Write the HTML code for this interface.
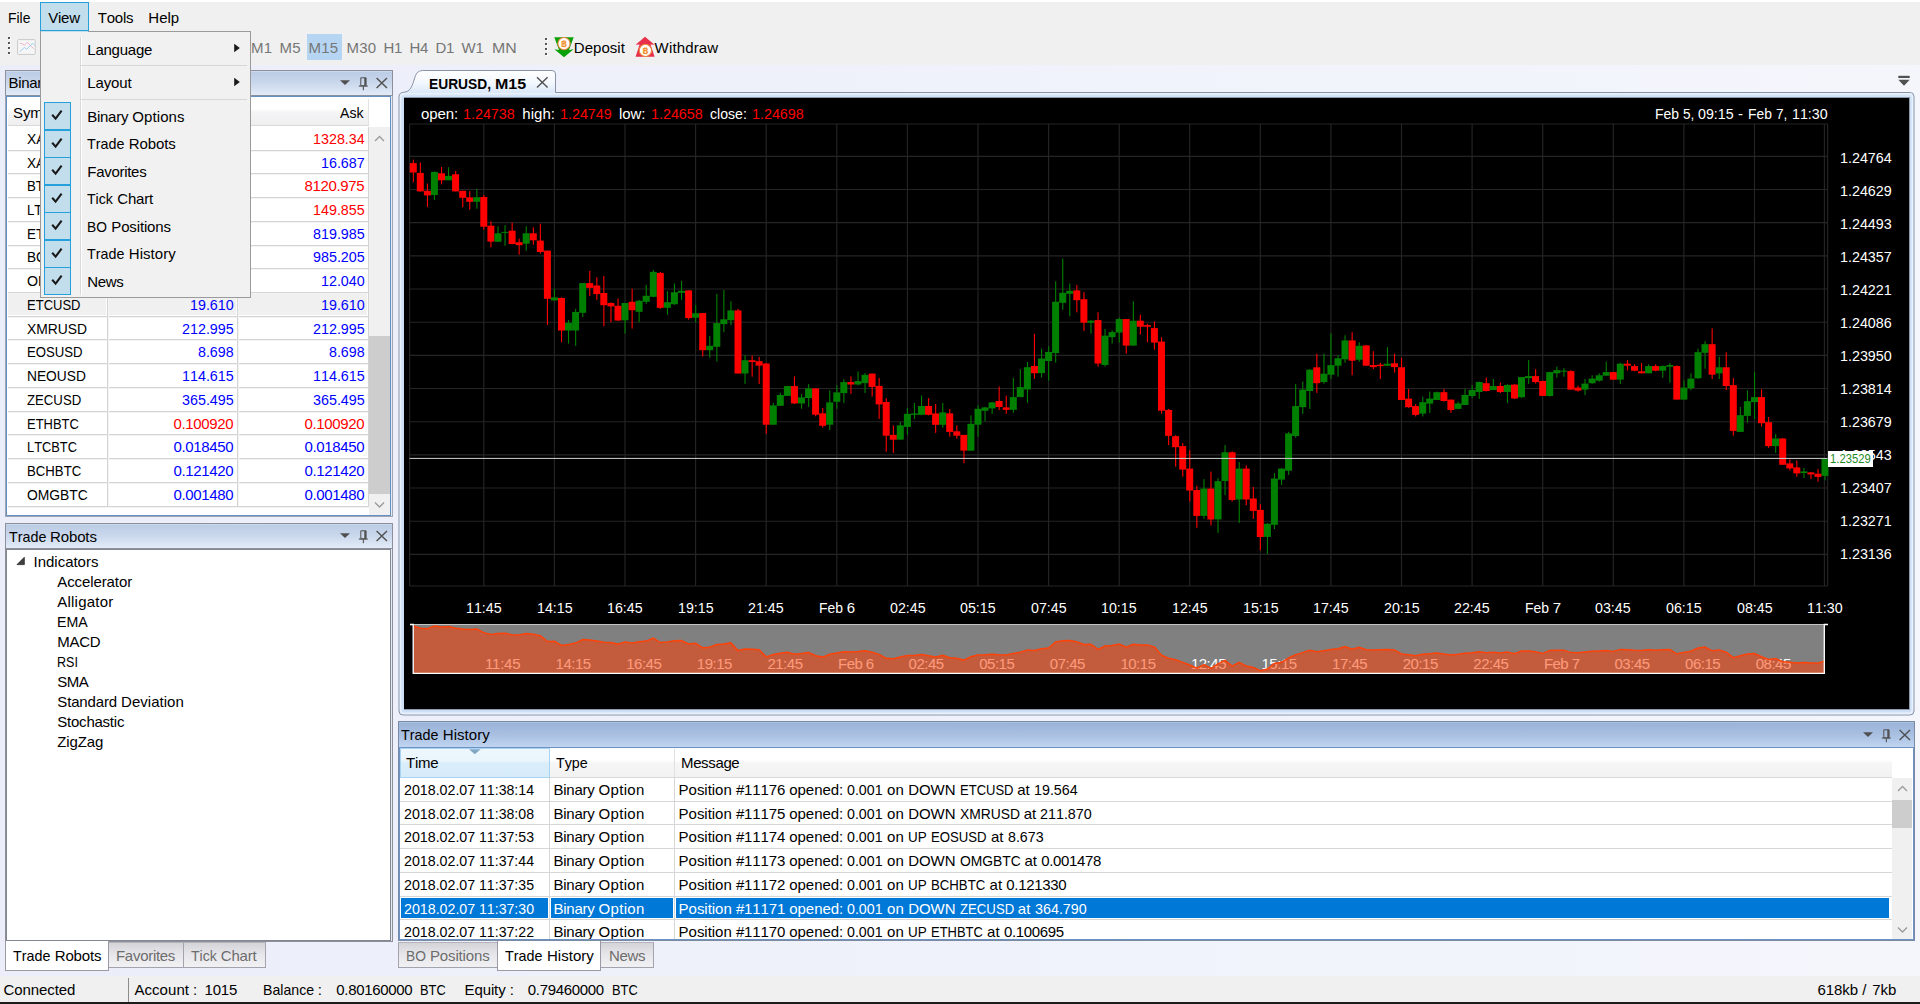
<!DOCTYPE html>
<html lang="en"><head><meta charset="utf-8"><title>Trading Terminal</title>
<style>
html,body{margin:0;padding:0}
body{width:1920px;height:1004px;overflow:hidden;background:#f0f0f0;font:15px/20px "Liberation Sans",sans-serif;position:relative}
div,span.t,svg{position:absolute;box-sizing:border-box}
span.t{white-space:pre;line-height:20px;height:20px;font-kerning:none;font-variant-ligatures:none}
span.w{display:inline-block;height:20px;vertical-align:baseline}
span.x{display:inline-block;transform-origin:0 50%}
.ttl{background:linear-gradient(#bacbe4,#c9d7ec 45%,#e4ecf8);border:1px solid #8d8f9a;border-bottom:none}
.ttla{background:linear-gradient(#98b2d6,#a9c0e2 50%,#c2d6f1);border:1px solid #7a8aa5;border-bottom:none}
.cell{background:#fff}
</style></head>
<body>
<div style="left:0px;top:0px;width:1920px;height:2px;background:#fff"></div>
<div style="left:0px;top:65px;width:1920px;height:911px;background:linear-gradient(90deg,#ebeef9,#f4f6fc)"></div>
<div style="left:0px;top:976px;width:1920px;height:28px;background:#f0f0f0"></div>
<div style="left:0px;top:1002px;width:1920px;height:2px;background:#1c1c1c"></div>
<div style="left:40px;top:2px;width:49px;height:29px;background:#c2deec;border:1px solid #26a0da"></div>
<span class="t" style="left:8.20px;top:7.50px;color:#000;"><span class="w" style="width:22.43px"><span class="x" style="transform:scaleX(0.9278)">File</span></span></span>
<span class="t" style="left:48.20px;top:7.50px;color:#000;"><span style="letter-spacing:-0.228px">View</span></span>
<span class="t" style="left:97.80px;top:7.50px;color:#000;"><span style="letter-spacing:-0.251px">Tools</span></span>
<span class="t" style="left:148.30px;top:7.50px;color:#000;"><span style="letter-spacing:0.021px">Help</span></span>
<div style="left:9px;top:38px;width:2.2px;height:2.2px;background:#fff"></div><div style="left:8px;top:37px;width:2.3px;height:2.3px;background:#555"></div><div style="left:9px;top:43px;width:2.2px;height:2.2px;background:#fff"></div><div style="left:8px;top:42px;width:2.3px;height:2.3px;background:#555"></div><div style="left:9px;top:48px;width:2.2px;height:2.2px;background:#fff"></div><div style="left:8px;top:47px;width:2.3px;height:2.3px;background:#555"></div><div style="left:9px;top:53px;width:2.2px;height:2.2px;background:#fff"></div><div style="left:8px;top:52px;width:2.3px;height:2.3px;background:#555"></div>
<svg style="left:17px;top:39px" width="19" height="16" viewBox="17 39 19 16"><rect x="17.6" y="39.6" width="17.6" height="14.8" rx="0.8" fill="#f6f6f6" stroke="#c9c9c9"/><polyline points="19.9,43.5 22,43.5 24.3,45.3 27,42.4 29,44 33.6,48.6" fill="none" stroke="#f0b4ca" stroke-width="1"/><polyline points="20,51.6 24.5,47.3 26.5,49.5 32.5,43.3 34.6,45.4" fill="none" stroke="#9dcbf3" stroke-width="1"/></svg>
<div style="left:307px;top:34px;width:35px;height:26px;background:#b5d5f3"></div>
<span class="t" style="left:251.00px;top:37.80px;color:#767676;"><span style="letter-spacing:0.356px">M1</span></span>
<span class="t" style="left:279.50px;top:37.80px;color:#767676;"><span style="letter-spacing:0.356px">M5</span></span>
<span class="t" style="left:308.50px;top:37.80px;color:#767676;"><span style="letter-spacing:0.151px">M15</span></span>
<span class="t" style="left:346.50px;top:37.80px;color:#767676;"><span style="letter-spacing:0.151px">M30</span></span>
<span class="t" style="left:383.50px;top:37.80px;color:#767676;"><span style="letter-spacing:-0.226px">H1</span></span>
<span class="t" style="left:409.50px;top:37.80px;color:#767676;"><span style="letter-spacing:-0.226px">H4</span></span>
<span class="t" style="left:435.50px;top:37.80px;color:#767676;"><span style="letter-spacing:-0.292px">D1</span></span>
<span class="t" style="left:461.50px;top:37.80px;color:#767676;"><span style="letter-spacing:-0.209px">W1</span></span>
<span class="t" style="left:491.50px;top:37.80px;color:#767676;"><span class="w" style="width:24.69px"><span class="x" style="transform:scaleX(1.0584)">MN</span></span></span>
<div style="left:546px;top:38.5px;width:2.2px;height:2.2px;background:#fff"></div><div style="left:545px;top:37.5px;width:2.3px;height:2.3px;background:#555"></div><div style="left:546px;top:43.5px;width:2.2px;height:2.2px;background:#fff"></div><div style="left:545px;top:42.5px;width:2.3px;height:2.3px;background:#555"></div><div style="left:546px;top:48.5px;width:2.2px;height:2.2px;background:#fff"></div><div style="left:545px;top:47.5px;width:2.3px;height:2.3px;background:#555"></div><div style="left:546px;top:53.5px;width:2.2px;height:2.2px;background:#fff"></div><div style="left:545px;top:52.5px;width:2.3px;height:2.3px;background:#555"></div>
<svg style="left:553px;top:36px" width="22" height="22" viewBox="553 36 22 22">
<polygon points="554.3,37.3 573.7,37.3 569,50 573.6,49.2 564,57.2 554.4,49.2 559,50" fill="#0aa00a"/>
<circle cx="564" cy="43.6" r="6.1" fill="#fff" stroke="#e8853a" stroke-width="1.1"/>
<text x="564.1" y="46.7" text-anchor="middle" font-family="Liberation Sans, sans-serif" font-weight="bold" font-size="8.4" fill="#f09030">B</text>
<line x1="563.3" y1="40" x2="563.3" y2="47.4" stroke="#f09030" stroke-width=".7"/><line x1="564.9" y1="40" x2="564.9" y2="47.4" stroke="#f09030" stroke-width=".7"/>
</svg>
<span class="t" style="left:573.80px;top:37.80px;color:#000;"><span style="letter-spacing:0.027px">Deposit</span></span>
<svg style="left:634px;top:35px" width="23" height="23" viewBox="634 35 23 23">
<polygon points="645,36.8 654.5,44.8 650.5,44.4 654.6,56.7 635.6,56.7 639.6,44.4 635.6,44.8" fill="#e8304a"/>
<circle cx="645.4" cy="50.4" r="6.1" fill="#fff" stroke="#e8853a" stroke-width="1.1"/>
<text x="645.5" y="53.5" text-anchor="middle" font-family="Liberation Sans, sans-serif" font-weight="bold" font-size="8.4" fill="#f09030">B</text>
<line x1="644.7" y1="46.8" x2="644.7" y2="54.2" stroke="#f09030" stroke-width=".7"/><line x1="646.3" y1="46.8" x2="646.3" y2="54.2" stroke="#f09030" stroke-width=".7"/>
</svg>
<span class="t" style="left:654.60px;top:37.80px;color:#000;"><span style="letter-spacing:0.148px">Withdraw</span></span>
<div class="ttl" style="left:5px;top:70px;width:388px;height:26px;"></div>
<div style="left:6px;top:71px;width:386px;height:1px;background:rgba(255,255,255,.25)"></div>
<span class="t" style="left:8.50px;top:73.10px;color:#000;"><span style="letter-spacing:-0.287px">Binary</span><span style="letter-spacing:-0.063px"> </span><span style="letter-spacing:0.111px">Options</span></span>
<svg style="left:339px;top:74px" width="52" height="18" viewBox="0 0 52 18">
<polygon points="1,6.2 11,6.2 6,11" fill="#505050"/>
<path d="M21.8,3.8 H27 V11.8 H21.8 Z" fill="none" stroke="#505050" stroke-width="1"/><rect x="25.3" y="3.8" width="1.9" height="8" fill="#505050"/>
<rect x="19.8" y="11.5" width="9" height="1.1" fill="#505050"/><rect x="23.8" y="12.4" width="1.1" height="3.8" fill="#505050"/>
<path d="M37.6,3.9 L48,14 M48,3.9 L37.6,14" stroke="#505050" stroke-width="1.4" fill="none"/>
</svg>
<div style="left:5px;top:95px;width:388px;height:422px;background:#e3ebf8;border:1px solid #a0a5b3;border-top-color:#8d8f9a"></div>
<div style="left:6px;top:96px;width:385px;height:420px;background:#fff;border:1px solid #6790c2"></div>
<div style="left:8px;top:98px;width:361px;height:28px;background:linear-gradient(#fff,#fff 40%,#f5f5f6 52%,#efeff1);border-bottom:1px solid #d9d9d9"></div>
<div style="left:107px;top:99px;width:1px;height:26px;background:#e2e2e2"></div>
<div style="left:237px;top:99px;width:1px;height:26px;background:#e2e2e2"></div>
<div style="left:368px;top:99px;width:1px;height:26px;background:#e2e2e2"></div>
<span class="t" style="left:13.00px;top:102.80px;color:#000;"><span style="letter-spacing:-0.109px">Symbol</span></span>
<span class="t" style="left:211.94px;top:102.80px;color:#000;"><span style="letter-spacing:-0.210px">Bid</span></span>
<span class="t" style="left:340.00px;top:102.80px;color:#000;"><span class="w" style="width:23.50px"><span class="x" style="transform:scaleX(0.9393)">Ask</span></span></span>
<div style="left:8px;top:150px;width:361px;height:1px;background:#d4d4d4"></div>
<div style="left:8px;top:151px;width:361px;height:1px;background:#f4f4f4"></div>
<span class="t" style="left:27.30px;top:128.80px;color:#000;"><span class="w" style="width:57.58px"><span class="x" style="transform:scaleX(0.9210)">XAUUSD</span></span></span>
<span class="t" style="left:181.53px;top:128.80px;color:#ff0000;"><span class="w" style="width:51.77px"><span class="x" style="transform:scaleX(0.9545)">1328.34</span></span></span>
<span class="t" style="left:312.53px;top:128.80px;color:#ff0000;"><span class="w" style="width:51.77px"><span class="x" style="transform:scaleX(0.9545)">1328.34</span></span></span>
<div style="left:8px;top:173px;width:361px;height:1px;background:#d4d4d4"></div>
<div style="left:8px;top:174px;width:361px;height:1px;background:#f4f4f4"></div>
<span class="t" style="left:27.30px;top:152.80px;color:#000;"><span class="w" style="width:57.56px"><span class="x" style="transform:scaleX(0.9085)">XAGUSD</span></span></span>
<span class="t" style="left:189.62px;top:152.80px;color:#0000ff;"><span class="w" style="width:43.68px"><span class="x" style="transform:scaleX(0.9519)">16.687</span></span></span>
<span class="t" style="left:320.62px;top:152.80px;color:#0000ff;"><span class="w" style="width:43.68px"><span class="x" style="transform:scaleX(0.9519)">16.687</span></span></span>
<div style="left:8px;top:197px;width:361px;height:1px;background:#d4d4d4"></div>
<div style="left:8px;top:198px;width:361px;height:1px;background:#f4f4f4"></div>
<span class="t" style="left:27.30px;top:175.80px;color:#000;"><span class="w" style="width:54.52px"><span class="x" style="transform:scaleX(0.8841)">BTCUSD</span></span></span>
<span class="t" style="left:173.45px;top:175.80px;color:#ff0000;"><span style="letter-spacing:-0.341px">8120.975</span></span>
<span class="t" style="left:304.45px;top:175.80px;color:#ff0000;"><span style="letter-spacing:-0.341px">8120.975</span></span>
<div style="left:8px;top:221px;width:361px;height:1px;background:#d4d4d4"></div>
<div style="left:8px;top:222px;width:361px;height:1px;background:#f4f4f4"></div>
<span class="t" style="left:27.30px;top:199.80px;color:#000;"><span class="w" style="width:52.99px"><span class="x" style="transform:scaleX(0.8829)">LTCUSD</span></span></span>
<span class="t" style="left:181.53px;top:199.80px;color:#ff0000;"><span class="w" style="width:51.77px"><span class="x" style="transform:scaleX(0.9545)">149.855</span></span></span>
<span class="t" style="left:312.53px;top:199.80px;color:#ff0000;"><span class="w" style="width:51.77px"><span class="x" style="transform:scaleX(0.9545)">149.855</span></span></span>
<div style="left:8px;top:245px;width:361px;height:1px;background:#d4d4d4"></div>
<div style="left:8px;top:246px;width:361px;height:1px;background:#f4f4f4"></div>
<span class="t" style="left:27.30px;top:223.80px;color:#000;"><span class="w" style="width:54.88px"><span class="x" style="transform:scaleX(0.8899)">ETHUSD</span></span></span>
<span class="t" style="left:181.53px;top:223.80px;color:#0000ff;"><span class="w" style="width:51.77px"><span class="x" style="transform:scaleX(0.9545)">819.985</span></span></span>
<span class="t" style="left:312.53px;top:223.80px;color:#0000ff;"><span class="w" style="width:51.77px"><span class="x" style="transform:scaleX(0.9545)">819.985</span></span></span>
<div style="left:8px;top:268px;width:361px;height:1px;background:#d4d4d4"></div>
<div style="left:8px;top:269px;width:361px;height:1px;background:#f4f4f4"></div>
<span class="t" style="left:27.30px;top:246.80px;color:#000;"><span class="w" style="width:57.31px"><span class="x" style="transform:scaleX(0.9048)">BCHUSD</span></span></span>
<span class="t" style="left:181.53px;top:246.80px;color:#0000ff;"><span class="w" style="width:51.77px"><span class="x" style="transform:scaleX(0.9545)">985.205</span></span></span>
<span class="t" style="left:312.53px;top:246.80px;color:#0000ff;"><span class="w" style="width:51.77px"><span class="x" style="transform:scaleX(0.9545)">985.205</span></span></span>
<div style="left:8px;top:292px;width:361px;height:1px;background:#d4d4d4"></div>
<div style="left:8px;top:293px;width:361px;height:1px;background:#f4f4f4"></div>
<span class="t" style="left:27.30px;top:270.80px;color:#000;"><span class="w" style="width:63.85px"><span class="x" style="transform:scaleX(0.9460)">OMGUSD</span></span></span>
<span class="t" style="left:189.62px;top:270.80px;color:#0000ff;"><span class="w" style="width:43.68px"><span class="x" style="transform:scaleX(0.9519)">12.040</span></span></span>
<span class="t" style="left:320.62px;top:270.80px;color:#0000ff;"><span class="w" style="width:43.68px"><span class="x" style="transform:scaleX(0.9519)">12.040</span></span></span>
<div style="left:8px;top:294px;width:98px;height:21px;background:#f0f0f0"></div>
<div style="left:109px;top:294px;width:127px;height:21px;background:#f0f0f0"></div>
<div style="left:239px;top:294px;width:128px;height:21px;background:#f0f0f0"></div>
<div style="left:8px;top:316px;width:361px;height:1px;background:#d4d4d4"></div>
<div style="left:8px;top:317px;width:361px;height:1px;background:#f4f4f4"></div>
<span class="t" style="left:27.30px;top:294.80px;color:#000;"><span class="w" style="width:53.52px"><span class="x" style="transform:scaleX(0.8678)">ETCUSD</span></span></span>
<span class="t" style="left:189.62px;top:294.80px;color:#0000ff;"><span class="w" style="width:43.68px"><span class="x" style="transform:scaleX(0.9519)">19.610</span></span></span>
<span class="t" style="left:320.62px;top:294.80px;color:#0000ff;"><span class="w" style="width:43.68px"><span class="x" style="transform:scaleX(0.9519)">19.610</span></span></span>
<div style="left:8px;top:339px;width:361px;height:1px;background:#d4d4d4"></div>
<div style="left:8px;top:340px;width:361px;height:1px;background:#f4f4f4"></div>
<span class="t" style="left:27.30px;top:318.80px;color:#000;"><span class="w" style="width:60.04px"><span class="x" style="transform:scaleX(0.9234)">XMRUSD</span></span></span>
<span class="t" style="left:181.53px;top:318.80px;color:#0000ff;"><span class="w" style="width:51.77px"><span class="x" style="transform:scaleX(0.9545)">212.995</span></span></span>
<span class="t" style="left:312.53px;top:318.80px;color:#0000ff;"><span class="w" style="width:51.77px"><span class="x" style="transform:scaleX(0.9545)">212.995</span></span></span>
<div style="left:8px;top:363px;width:361px;height:1px;background:#d4d4d4"></div>
<div style="left:8px;top:364px;width:361px;height:1px;background:#f4f4f4"></div>
<span class="t" style="left:27.30px;top:341.80px;color:#000;"><span class="w" style="width:55.64px"><span class="x" style="transform:scaleX(0.8782)">EOSUSD</span></span></span>
<span class="t" style="left:197.70px;top:341.80px;color:#0000ff;"><span class="w" style="width:35.60px"><span class="x" style="transform:scaleX(0.9480)">8.698</span></span></span>
<span class="t" style="left:328.70px;top:341.80px;color:#0000ff;"><span class="w" style="width:35.60px"><span class="x" style="transform:scaleX(0.9480)">8.698</span></span></span>
<div style="left:8px;top:387px;width:361px;height:1px;background:#d4d4d4"></div>
<div style="left:8px;top:388px;width:361px;height:1px;background:#f4f4f4"></div>
<span class="t" style="left:27.30px;top:365.80px;color:#000;"><span class="w" style="width:58.90px"><span class="x" style="transform:scaleX(0.9176)">NEOUSD</span></span></span>
<span class="t" style="left:181.53px;top:365.80px;color:#0000ff;"><span class="w" style="width:51.77px"><span class="x" style="transform:scaleX(0.9545)">114.615</span></span></span>
<span class="t" style="left:312.53px;top:365.80px;color:#0000ff;"><span class="w" style="width:51.77px"><span class="x" style="transform:scaleX(0.9545)">114.615</span></span></span>
<div style="left:8px;top:411px;width:361px;height:1px;background:#d4d4d4"></div>
<div style="left:8px;top:412px;width:361px;height:1px;background:#f4f4f4"></div>
<span class="t" style="left:27.30px;top:389.80px;color:#000;"><span class="w" style="width:54.21px"><span class="x" style="transform:scaleX(0.8791)">ZECUSD</span></span></span>
<span class="t" style="left:181.53px;top:389.80px;color:#0000ff;"><span class="w" style="width:51.77px"><span class="x" style="transform:scaleX(0.9545)">365.495</span></span></span>
<span class="t" style="left:312.53px;top:389.80px;color:#0000ff;"><span class="w" style="width:51.77px"><span class="x" style="transform:scaleX(0.9545)">365.495</span></span></span>
<div style="left:8px;top:434px;width:361px;height:1px;background:#d4d4d4"></div>
<div style="left:8px;top:435px;width:361px;height:1px;background:#f4f4f4"></div>
<span class="t" style="left:27.30px;top:413.80px;color:#000;"><span class="w" style="width:51.83px"><span class="x" style="transform:scaleX(0.8639)">ETHBTC</span></span></span>
<span class="t" style="left:173.45px;top:413.80px;color:#ff0000;"><span style="letter-spacing:-0.341px">0.100920</span></span>
<span class="t" style="left:304.45px;top:413.80px;color:#ff0000;"><span style="letter-spacing:-0.341px">0.100920</span></span>
<div style="left:8px;top:458px;width:361px;height:1px;background:#d4d4d4"></div>
<div style="left:8px;top:459px;width:361px;height:1px;background:#f4f4f4"></div>
<span class="t" style="left:27.30px;top:436.80px;color:#000;"><span class="w" style="width:49.94px"><span class="x" style="transform:scaleX(0.8560)">LTCBTC</span></span></span>
<span class="t" style="left:173.45px;top:436.80px;color:#0000ff;"><span style="letter-spacing:-0.341px">0.018450</span></span>
<span class="t" style="left:304.45px;top:436.80px;color:#0000ff;"><span style="letter-spacing:-0.341px">0.018450</span></span>
<div style="left:8px;top:482px;width:361px;height:1px;background:#d4d4d4"></div>
<div style="left:8px;top:483px;width:361px;height:1px;background:#f4f4f4"></div>
<span class="t" style="left:27.30px;top:460.80px;color:#000;"><span class="w" style="width:54.27px"><span class="x" style="transform:scaleX(0.8799)">BCHBTC</span></span></span>
<span class="t" style="left:173.45px;top:460.80px;color:#0000ff;"><span style="letter-spacing:-0.341px">0.121420</span></span>
<span class="t" style="left:304.45px;top:460.80px;color:#0000ff;"><span style="letter-spacing:-0.341px">0.121420</span></span>
<div style="left:8px;top:506px;width:361px;height:1px;background:#d4d4d4"></div>
<div style="left:8px;top:507px;width:361px;height:1px;background:#f4f4f4"></div>
<span class="t" style="left:27.30px;top:484.80px;color:#000;"><span class="w" style="width:60.81px"><span class="x" style="transform:scaleX(0.9235)">OMGBTC</span></span></span>
<span class="t" style="left:173.45px;top:484.80px;color:#0000ff;"><span style="letter-spacing:-0.341px">0.001480</span></span>
<span class="t" style="left:304.45px;top:484.80px;color:#0000ff;"><span style="letter-spacing:-0.341px">0.001480</span></span>
<div style="left:107px;top:127px;width:1px;height:379px;background:#d4d4d4"></div>
<div style="left:108px;top:127px;width:1px;height:379px;background:#f4f4f4"></div>
<div style="left:237px;top:127px;width:1px;height:379px;background:#d4d4d4"></div>
<div style="left:238px;top:127px;width:1px;height:379px;background:#f4f4f4"></div>
<div style="left:368px;top:127px;width:1px;height:379px;background:#d4d4d4"></div>
<div style="left:369px;top:127px;width:1px;height:379px;background:#f4f4f4"></div>
<div style="left:369px;top:127px;width:21px;height:388px;background:#f0f0f0"></div>
<div style="left:369px;top:336px;width:21px;height:157.5px;background:#cdcdcd"></div>
<svg style="left:374px;top:134.5px" width="11" height="8" viewBox="0 0 11 8"><polyline points="1,6 5.5,1.5 10,6" fill="none" stroke="#9a9a9a" stroke-width="1.3"/></svg>
<svg style="left:374px;top:500.8px" width="11" height="8" viewBox="0 0 11 8"><polyline points="1,1.5 5.5,6 10,1.5" fill="none" stroke="#9a9a9a" stroke-width="1.3"/></svg>
<div class="ttl" style="left:5px;top:523px;width:388px;height:26px;"></div>
<div style="left:6px;top:524px;width:386px;height:1px;background:rgba(255,255,255,.25)"></div>
<span class="t" style="left:8.50px;top:526.60px;color:#000;"><span class="w" style="width:37.38px"><span class="x" style="transform:scaleX(0.9539)">Trade</span></span><span style="letter-spacing:-0.063px"> </span><span style="letter-spacing:-0.119px">Robots</span></span>
<svg style="left:339px;top:527px" width="52" height="18" viewBox="0 0 52 18">
<polygon points="1,6.2 11,6.2 6,11" fill="#505050"/>
<path d="M21.8,3.8 H27 V11.8 H21.8 Z" fill="none" stroke="#505050" stroke-width="1"/><rect x="25.3" y="3.8" width="1.9" height="8" fill="#505050"/>
<rect x="19.8" y="11.5" width="9" height="1.1" fill="#505050"/><rect x="23.8" y="12.4" width="1.1" height="3.8" fill="#505050"/>
<path d="M37.6,3.9 L48,14 M48,3.9 L37.6,14" stroke="#505050" stroke-width="1.4" fill="none"/>
</svg>
<div style="left:5px;top:548px;width:388px;height:394px;background:#e3ebf8;border:1px solid #8d8f9a"></div>
<div style="left:6px;top:549px;width:385px;height:392px;background:#fff;border:1px solid #828790"></div>
<svg style="left:16px;top:556px" width="10" height="10" viewBox="0 0 10 10"><polygon points="1,8.6 8.3,8.6 8.3,1.3" fill="#404040" stroke="#262626" stroke-width=".8"/></svg>
<span class="t" style="left:33.50px;top:552.00px;color:#000;"><span style="letter-spacing:-0.010px">Indicators</span></span>
<span class="t" style="left:57.30px;top:572.00px;color:#000;"><span style="letter-spacing:-0.099px">Accelerator</span></span>
<span class="t" style="left:57.30px;top:592.00px;color:#000;"><span style="letter-spacing:0.214px">Alligator</span></span>
<span class="t" style="left:57.30px;top:612.00px;color:#000;"><span class="w" style="width:30.73px"><span class="x" style="transform:scaleX(0.9452)">EMA</span></span></span>
<span class="t" style="left:57.30px;top:632.00px;color:#000;"><span style="letter-spacing:-0.306px">MACD</span></span>
<span class="t" style="left:57.30px;top:652.00px;color:#000;"><span class="w" style="width:20.93px"><span class="x" style="transform:scaleX(0.8365)">RSI</span></span></span>
<span class="t" style="left:57.30px;top:672.00px;color:#000;"><span style="letter-spacing:-0.470px">SMA</span></span>
<span class="t" style="left:57.30px;top:692.00px;color:#000;"><span style="letter-spacing:-0.153px">Standard</span><span style="letter-spacing:-0.063px"> </span><span style="letter-spacing:0.028px">Deviation</span></span>
<span class="t" style="left:57.30px;top:712.00px;color:#000;"><span style="letter-spacing:-0.232px">Stochastic</span></span>
<span class="t" style="left:57.30px;top:732.00px;color:#000;"><span style="letter-spacing:-0.108px">ZigZag</span></span>
<div style="left:108px;top:942px;width:76px;height:26px;background:linear-gradient(#d3d3d8,#e6e6ea 45%,#f1f1f4);border:1px solid #a3a3ad;border-top-color:#b4b4bc"></div><span class="t" style="left:116.00px;top:945.80px;color:#6c6c6c;"><span style="letter-spacing:-0.292px">Favorites</span></span><div style="left:183px;top:942px;width:83px;height:26px;background:linear-gradient(#d3d3d8,#e6e6ea 45%,#f1f1f4);border:1px solid #a3a3ad;border-top-color:#b4b4bc"></div><span class="t" style="left:190.80px;top:945.80px;color:#6c6c6c;"><span class="w" style="width:25.88px"><span class="x" style="transform:scaleX(0.9410)">Tick</span></span><span style="letter-spacing:-0.063px"> </span><span style="letter-spacing:-0.198px">Chart</span></span><div style="left:5px;top:941px;width:104px;height:29.5px;background:#fff;border:1px solid #9a9aa6;border-top:none"></div><span class="t" style="left:13.20px;top:945.80px;color:#000;"><span class="w" style="width:37.38px"><span class="x" style="transform:scaleX(0.9539)">Trade</span></span><span style="letter-spacing:-0.063px"> </span><span style="letter-spacing:-0.119px">Robots</span></span>
<svg style="left:390px;top:64px" width="1530" height="660" viewBox="390 64 1530 660">
<defs><linearGradient id="pg" x1="0" y1="0" x2="0" y2="1" gradientUnits="userSpaceOnUse" ><stop offset="0" stop-color="#fff"/><stop offset="0.1" stop-color="#fff"/><stop offset="1" stop-color="#fff"/></linearGradient>
<linearGradient id="tg" gradientUnits="userSpaceOnUse" x1="0" y1="70" x2="0" y2="98"><stop offset="0" stop-color="#ffffff"/><stop offset=".45" stop-color="#f3f8fe"/><stop offset="1" stop-color="#cfe0f6"/></linearGradient></defs>
<path d="M399,711 V97 Q399,92.6 403.5,92.3 C410.6,92 412.2,86 415,77 C416.6,72 419,70.5 424,70.5 H552 Q555.5,70.5 555.5,74 V92.5 H1910 Q1914,92.5 1914,96.5 V711 Q1914,715 1910,715 H403 Q399,715 399,711 Z" fill="url(#tg)" stroke="#8a92a8" stroke-width="1"/>
<path d="M400.6,710 V97 Q400.6,94 403.6,93.8 H1909.4 Q1912.4,94 1912.4,97 V710 Q1912.4,713.4 1909.4,713.4 H403.6 Q400.6,713.4 400.6,710Z" fill="none" stroke="#e9f1fb" stroke-width="1.6"/>
<path d="M537,77.3 L547.6,87.6 M547.6,77.3 L537,87.6" stroke="#505050" stroke-width="1.4"/>
<rect x="1898.3" y="75.8" width="11.4" height="2.2" fill="#505050"/><polygon points="1898.3,79.8 1909.7,79.8 1904,85.8" fill="#505050"/>
</svg>
<span class="t" style="left:429.00px;top:73.80px;color:#000;font-weight:bold;"><span class="w" style="width:61.98px"><span class="x" style="transform:scaleX(0.9181)">EURUSD,</span></span><span style="letter-spacing:0.152px"> </span><span class="w" style="width:31.19px"><span class="x" style="transform:scaleX(1.0687)">M15</span></span></span>
<div style="left:403.5px;top:97px;width:1506px;height:612.8px;background:#8d98ab"></div>
<div style="left:404px;top:97.5px;width:1505px;height:611.6px;background:#000"></div>
<svg style="left:404px;top:97px" width="1505" height="613" viewBox="404 97 1505 613" shape-rendering="crispEdges">
<g stroke="#252525" stroke-width="1.15" shape-rendering="auto">
<line x1="409.6" y1="124.0" x2="1827.6" y2="124.0"/>
<line x1="409.6" y1="156.3" x2="1827.6" y2="156.3"/>
<line x1="409.6" y1="189.5" x2="1827.6" y2="189.5"/>
<line x1="409.6" y1="222.6" x2="1827.6" y2="222.6"/>
<line x1="409.6" y1="255.8" x2="1827.6" y2="255.8"/>
<line x1="409.6" y1="289.0" x2="1827.6" y2="289.0"/>
<line x1="409.6" y1="322.2" x2="1827.6" y2="322.2"/>
<line x1="409.6" y1="355.3" x2="1827.6" y2="355.3"/>
<line x1="409.6" y1="388.5" x2="1827.6" y2="388.5"/>
<line x1="409.6" y1="421.7" x2="1827.6" y2="421.7"/>
<line x1="409.6" y1="454.8" x2="1827.6" y2="454.8"/>
<line x1="409.6" y1="488.0" x2="1827.6" y2="488.0"/>
<line x1="409.6" y1="521.2" x2="1827.6" y2="521.2"/>
<line x1="409.6" y1="554.3" x2="1827.6" y2="554.3"/>
<line x1="409.6" y1="586.0" x2="1827.6" y2="586.0"/>
<line x1="409.6" y1="124" x2="409.6" y2="586"/>
<line x1="483.8" y1="124" x2="483.8" y2="586"/>
<line x1="554.4" y1="124" x2="554.4" y2="586"/>
<line x1="625.0" y1="124" x2="625.0" y2="586"/>
<line x1="695.6" y1="124" x2="695.6" y2="586"/>
<line x1="766.2" y1="124" x2="766.2" y2="586"/>
<line x1="836.8" y1="124" x2="836.8" y2="586"/>
<line x1="907.4" y1="124" x2="907.4" y2="586"/>
<line x1="978.0" y1="124" x2="978.0" y2="586"/>
<line x1="1048.6" y1="124" x2="1048.6" y2="586"/>
<line x1="1119.2" y1="124" x2="1119.2" y2="586"/>
<line x1="1189.7" y1="124" x2="1189.7" y2="586"/>
<line x1="1260.3" y1="124" x2="1260.3" y2="586"/>
<line x1="1330.9" y1="124" x2="1330.9" y2="586"/>
<line x1="1401.5" y1="124" x2="1401.5" y2="586"/>
<line x1="1472.1" y1="124" x2="1472.1" y2="586"/>
<line x1="1542.7" y1="124" x2="1542.7" y2="586"/>
<line x1="1613.3" y1="124" x2="1613.3" y2="586"/>
<line x1="1683.9" y1="124" x2="1683.9" y2="586"/>
<line x1="1754.5" y1="124" x2="1754.5" y2="586"/>
<line x1="1824.4" y1="124" x2="1824.4" y2="586"/>
<line x1="1827.6" y1="124" x2="1827.6" y2="586"/>
</g>
<rect x="412.8" y="159.6" width="1.1" height="22.7" fill="#ff0000" shape-rendering="auto"/><rect x="409.8" y="163.1" width="7" height="9.4" fill="#ff0000" shape-rendering="auto"/>
<rect x="419.8" y="162.4" width="1.1" height="29.1" fill="#ff0000" shape-rendering="auto"/><rect x="416.8" y="172.9" width="7" height="18.5" fill="#ff0000" shape-rendering="auto"/>
<rect x="426.9" y="183.5" width="1.1" height="23.7" fill="#ff0000" shape-rendering="auto"/><rect x="423.9" y="190.8" width="7" height="4.6" fill="#ff0000" shape-rendering="auto"/>
<rect x="433.9" y="171.5" width="1.1" height="28.3" fill="#008000" shape-rendering="auto"/><rect x="430.9" y="171.9" width="7" height="23.1" fill="#008000" shape-rendering="auto"/>
<rect x="441.0" y="167.1" width="1.1" height="17.3" fill="#ff0000" shape-rendering="auto"/><rect x="438.0" y="173.3" width="7" height="7.0" fill="#ff0000" shape-rendering="auto"/>
<rect x="448.0" y="167.3" width="1.1" height="12.9" fill="#008000" shape-rendering="auto"/><rect x="445.0" y="175.9" width="7" height="4.4" fill="#008000" shape-rendering="auto"/>
<rect x="455.1" y="170.9" width="1.1" height="20.5" fill="#ff0000" shape-rendering="auto"/><rect x="452.1" y="174.3" width="7" height="17.1" fill="#ff0000" shape-rendering="auto"/>
<rect x="462.2" y="190.8" width="1.1" height="16.3" fill="#ff0000" shape-rendering="auto"/><rect x="459.2" y="190.8" width="7" height="7.0" fill="#ff0000" shape-rendering="auto"/>
<rect x="469.2" y="191.2" width="1.1" height="18.5" fill="#ff0000" shape-rendering="auto"/><rect x="466.2" y="197.4" width="7" height="4.4" fill="#ff0000" shape-rendering="auto"/>
<rect x="476.3" y="188.8" width="1.1" height="19.9" fill="#008000" shape-rendering="auto"/><rect x="473.3" y="197.2" width="7" height="4.6" fill="#008000" shape-rendering="auto"/>
<rect x="483.3" y="195.0" width="1.1" height="34.7" fill="#ff0000" shape-rendering="auto"/><rect x="480.3" y="197.0" width="7" height="29.7" fill="#ff0000" shape-rendering="auto"/>
<rect x="490.4" y="221.3" width="1.1" height="25.9" fill="#ff0000" shape-rendering="auto"/><rect x="487.4" y="225.7" width="7" height="15.9" fill="#ff0000" shape-rendering="auto"/>
<rect x="497.5" y="226.3" width="1.1" height="15.7" fill="#008000" shape-rendering="auto"/><rect x="494.5" y="233.3" width="7" height="8.4" fill="#008000" shape-rendering="auto"/>
<rect x="504.5" y="225.1" width="1.1" height="20.7" fill="#008000" shape-rendering="auto"/><rect x="501.5" y="231.9" width="7" height="1.0" fill="#008000" shape-rendering="auto"/>
<rect x="511.6" y="222.7" width="1.1" height="21.7" fill="#ff0000" shape-rendering="auto"/><rect x="508.6" y="230.7" width="7" height="13.3" fill="#ff0000" shape-rendering="auto"/>
<rect x="518.6" y="238.6" width="1.1" height="16.1" fill="#ff0000" shape-rendering="auto"/><rect x="515.6" y="242.2" width="7" height="3.0" fill="#ff0000" shape-rendering="auto"/>
<rect x="525.7" y="226.3" width="1.1" height="24.3" fill="#008000" shape-rendering="auto"/><rect x="522.7" y="233.3" width="7" height="10.4" fill="#008000" shape-rendering="auto"/>
<rect x="532.8" y="227.3" width="1.1" height="17.5" fill="#ff0000" shape-rendering="auto"/><rect x="529.8" y="233.3" width="7" height="7.0" fill="#ff0000" shape-rendering="auto"/>
<rect x="539.8" y="223.7" width="1.1" height="29.9" fill="#ff0000" shape-rendering="auto"/><rect x="536.8" y="240.6" width="7" height="11.4" fill="#ff0000" shape-rendering="auto"/>
<rect x="546.9" y="250.6" width="1.1" height="74.3" fill="#ff0000" shape-rendering="auto"/><rect x="543.9" y="250.6" width="7" height="48.2" fill="#ff0000" shape-rendering="auto"/>
<rect x="553.9" y="288.8" width="1.1" height="11.6" fill="#008000" shape-rendering="auto"/><rect x="550.9" y="297.4" width="7" height="3.0" fill="#008000" shape-rendering="auto"/>
<rect x="561.0" y="297.4" width="1.1" height="44.8" fill="#ff0000" shape-rendering="auto"/><rect x="558.0" y="298.0" width="7" height="32.5" fill="#ff0000" shape-rendering="auto"/>
<rect x="568.0" y="319.9" width="1.1" height="23.7" fill="#008000" shape-rendering="auto"/><rect x="565.0" y="322.9" width="7" height="7.6" fill="#008000" shape-rendering="auto"/>
<rect x="575.1" y="308.8" width="1.1" height="37.1" fill="#008000" shape-rendering="auto"/><rect x="572.1" y="312.0" width="7" height="18.5" fill="#008000" shape-rendering="auto"/>
<rect x="582.2" y="283.1" width="1.1" height="33.9" fill="#008000" shape-rendering="auto"/><rect x="579.2" y="283.1" width="7" height="29.7" fill="#008000" shape-rendering="auto"/>
<rect x="589.2" y="270.9" width="1.1" height="25.1" fill="#ff0000" shape-rendering="auto"/><rect x="586.2" y="283.1" width="7" height="4.8" fill="#ff0000" shape-rendering="auto"/>
<rect x="596.3" y="277.1" width="1.1" height="22.7" fill="#ff0000" shape-rendering="auto"/><rect x="593.3" y="285.5" width="7" height="8.6" fill="#ff0000" shape-rendering="auto"/>
<rect x="603.3" y="275.9" width="1.1" height="50.2" fill="#ff0000" shape-rendering="auto"/><rect x="600.3" y="293.0" width="7" height="12.2" fill="#ff0000" shape-rendering="auto"/>
<rect x="610.4" y="302.4" width="1.1" height="19.9" fill="#ff0000" shape-rendering="auto"/><rect x="607.4" y="303.0" width="7" height="3.4" fill="#ff0000" shape-rendering="auto"/>
<rect x="617.5" y="298.6" width="1.1" height="22.3" fill="#ff0000" shape-rendering="auto"/><rect x="614.5" y="305.8" width="7" height="14.7" fill="#ff0000" shape-rendering="auto"/>
<rect x="624.5" y="303.0" width="1.1" height="30.5" fill="#008000" shape-rendering="auto"/><rect x="621.5" y="303.0" width="7" height="17.3" fill="#008000" shape-rendering="auto"/>
<rect x="631.6" y="288.8" width="1.1" height="39.8" fill="#ff0000" shape-rendering="auto"/><rect x="628.6" y="301.8" width="7" height="8.4" fill="#ff0000" shape-rendering="auto"/>
<rect x="638.6" y="299.8" width="1.1" height="22.3" fill="#008000" shape-rendering="auto"/><rect x="635.6" y="300.8" width="7" height="11.0" fill="#008000" shape-rendering="auto"/>
<rect x="645.7" y="284.9" width="1.1" height="18.9" fill="#008000" shape-rendering="auto"/><rect x="642.7" y="295.8" width="7" height="6.0" fill="#008000" shape-rendering="auto"/>
<rect x="652.8" y="269.9" width="1.1" height="27.3" fill="#008000" shape-rendering="auto"/><rect x="649.8" y="271.9" width="7" height="24.9" fill="#008000" shape-rendering="auto"/>
<rect x="659.8" y="271.9" width="1.1" height="36.9" fill="#ff0000" shape-rendering="auto"/><rect x="656.8" y="272.9" width="7" height="34.9" fill="#ff0000" shape-rendering="auto"/>
<rect x="666.9" y="291.2" width="1.1" height="23.5" fill="#008000" shape-rendering="auto"/><rect x="663.9" y="302.2" width="7" height="5.6" fill="#008000" shape-rendering="auto"/>
<rect x="673.9" y="283.5" width="1.1" height="21.3" fill="#008000" shape-rendering="auto"/><rect x="670.9" y="292.2" width="7" height="12.0" fill="#008000" shape-rendering="auto"/>
<rect x="681.0" y="280.9" width="1.1" height="18.9" fill="#008000" shape-rendering="auto"/><rect x="678.0" y="290.8" width="7" height="2.0" fill="#008000" shape-rendering="auto"/>
<rect x="688.1" y="290.4" width="1.1" height="29.3" fill="#ff0000" shape-rendering="auto"/><rect x="685.1" y="290.4" width="7" height="27.7" fill="#ff0000" shape-rendering="auto"/>
<rect x="695.1" y="305.2" width="1.1" height="16.9" fill="#008000" shape-rendering="auto"/><rect x="692.1" y="313.3" width="7" height="4.4" fill="#008000" shape-rendering="auto"/>
<rect x="702.2" y="313.1" width="1.1" height="43.4" fill="#ff0000" shape-rendering="auto"/><rect x="699.2" y="313.1" width="7" height="37.1" fill="#ff0000" shape-rendering="auto"/>
<rect x="709.2" y="336.1" width="1.1" height="21.7" fill="#008000" shape-rendering="auto"/><rect x="706.2" y="345.8" width="7" height="4.4" fill="#008000" shape-rendering="auto"/>
<rect x="716.3" y="293.8" width="1.1" height="67.7" fill="#008000" shape-rendering="auto"/><rect x="713.3" y="323.1" width="7" height="23.7" fill="#008000" shape-rendering="auto"/>
<rect x="723.3" y="290.0" width="1.1" height="42.2" fill="#008000" shape-rendering="auto"/><rect x="720.3" y="319.3" width="7" height="4.8" fill="#008000" shape-rendering="auto"/>
<rect x="730.4" y="301.2" width="1.1" height="23.9" fill="#008000" shape-rendering="auto"/><rect x="727.4" y="310.4" width="7" height="9.8" fill="#008000" shape-rendering="auto"/>
<rect x="737.5" y="308.8" width="1.1" height="64.7" fill="#ff0000" shape-rendering="auto"/><rect x="734.5" y="310.4" width="7" height="63.1" fill="#ff0000" shape-rendering="auto"/>
<rect x="744.5" y="355.2" width="1.1" height="28.7" fill="#008000" shape-rendering="auto"/><rect x="741.5" y="360.2" width="7" height="13.3" fill="#008000" shape-rendering="auto"/>
<rect x="751.6" y="355.6" width="1.1" height="21.1" fill="#ff0000" shape-rendering="auto"/><rect x="748.6" y="360.2" width="7" height="1.8" fill="#ff0000" shape-rendering="auto"/>
<rect x="758.6" y="356.8" width="1.1" height="27.3" fill="#ff0000" shape-rendering="auto"/><rect x="755.6" y="361.2" width="7" height="4.4" fill="#ff0000" shape-rendering="auto"/>
<rect x="765.7" y="363.1" width="1.1" height="70.7" fill="#ff0000" shape-rendering="auto"/><rect x="762.7" y="363.5" width="7" height="61.2" fill="#ff0000" shape-rendering="auto"/>
<rect x="772.8" y="403.0" width="1.1" height="21.7" fill="#008000" shape-rendering="auto"/><rect x="769.8" y="405.4" width="7" height="19.3" fill="#008000" shape-rendering="auto"/>
<rect x="779.8" y="392.8" width="1.1" height="12.9" fill="#008000" shape-rendering="auto"/><rect x="776.8" y="395.0" width="7" height="10.8" fill="#008000" shape-rendering="auto"/>
<rect x="786.9" y="386.1" width="1.1" height="9.8" fill="#008000" shape-rendering="auto"/><rect x="783.9" y="386.1" width="7" height="9.8" fill="#008000" shape-rendering="auto"/>
<rect x="793.9" y="376.5" width="1.1" height="27.5" fill="#ff0000" shape-rendering="auto"/><rect x="790.9" y="386.1" width="7" height="17.3" fill="#ff0000" shape-rendering="auto"/>
<rect x="801.0" y="394.0" width="1.1" height="14.7" fill="#008000" shape-rendering="auto"/><rect x="798.0" y="397.4" width="7" height="6.0" fill="#008000" shape-rendering="auto"/>
<rect x="808.1" y="384.1" width="1.1" height="22.7" fill="#008000" shape-rendering="auto"/><rect x="805.1" y="388.4" width="7" height="9.6" fill="#008000" shape-rendering="auto"/>
<rect x="815.1" y="388.4" width="1.1" height="27.9" fill="#ff0000" shape-rendering="auto"/><rect x="812.1" y="388.4" width="7" height="26.3" fill="#ff0000" shape-rendering="auto"/>
<rect x="822.2" y="408.0" width="1.1" height="19.7" fill="#ff0000" shape-rendering="auto"/><rect x="819.2" y="413.3" width="7" height="12.5" fill="#ff0000" shape-rendering="auto"/>
<rect x="829.2" y="390.4" width="1.1" height="39.8" fill="#008000" shape-rendering="auto"/><rect x="826.2" y="402.4" width="7" height="22.3" fill="#008000" shape-rendering="auto"/>
<rect x="836.3" y="385.5" width="1.1" height="23.3" fill="#008000" shape-rendering="auto"/><rect x="833.3" y="392.4" width="7" height="9.4" fill="#008000" shape-rendering="auto"/>
<rect x="843.3" y="379.1" width="1.1" height="23.9" fill="#008000" shape-rendering="auto"/><rect x="840.3" y="382.1" width="7" height="11.0" fill="#008000" shape-rendering="auto"/>
<rect x="850.4" y="376.5" width="1.1" height="17.3" fill="#ff0000" shape-rendering="auto"/><rect x="847.4" y="382.1" width="7" height="2.4" fill="#ff0000" shape-rendering="auto"/>
<rect x="857.5" y="371.6" width="1.1" height="13.9" fill="#008000" shape-rendering="auto"/><rect x="854.5" y="381.1" width="7" height="3.4" fill="#008000" shape-rendering="auto"/>
<rect x="864.5" y="373.0" width="1.1" height="19.9" fill="#008000" shape-rendering="auto"/><rect x="861.5" y="374.9" width="7" height="8.2" fill="#008000" shape-rendering="auto"/>
<rect x="871.6" y="373.6" width="1.1" height="22.9" fill="#ff0000" shape-rendering="auto"/><rect x="868.6" y="373.6" width="7" height="13.3" fill="#ff0000" shape-rendering="auto"/>
<rect x="878.6" y="377.9" width="1.1" height="41.0" fill="#ff0000" shape-rendering="auto"/><rect x="875.6" y="385.9" width="7" height="18.5" fill="#ff0000" shape-rendering="auto"/>
<rect x="885.7" y="398.1" width="1.1" height="53.6" fill="#ff0000" shape-rendering="auto"/><rect x="882.7" y="402.0" width="7" height="33.7" fill="#ff0000" shape-rendering="auto"/>
<rect x="892.8" y="425.3" width="1.1" height="27.5" fill="#ff0000" shape-rendering="auto"/><rect x="889.8" y="434.9" width="7" height="4.8" fill="#ff0000" shape-rendering="auto"/>
<rect x="899.8" y="422.0" width="1.1" height="17.7" fill="#008000" shape-rendering="auto"/><rect x="896.8" y="425.3" width="7" height="14.3" fill="#008000" shape-rendering="auto"/>
<rect x="906.9" y="407.8" width="1.1" height="27.1" fill="#008000" shape-rendering="auto"/><rect x="903.9" y="413.8" width="7" height="13.1" fill="#008000" shape-rendering="auto"/>
<rect x="913.9" y="403.0" width="1.1" height="15.9" fill="#008000" shape-rendering="auto"/><rect x="910.9" y="413.4" width="7" height="1.4" fill="#008000" shape-rendering="auto"/>
<rect x="921.0" y="395.5" width="1.1" height="19.3" fill="#008000" shape-rendering="auto"/><rect x="918.0" y="406.0" width="7" height="8.8" fill="#008000" shape-rendering="auto"/>
<rect x="928.1" y="398.1" width="1.1" height="17.3" fill="#ff0000" shape-rendering="auto"/><rect x="925.1" y="406.0" width="7" height="8.8" fill="#ff0000" shape-rendering="auto"/>
<rect x="935.1" y="404.0" width="1.1" height="28.9" fill="#ff0000" shape-rendering="auto"/><rect x="932.1" y="413.4" width="7" height="11.4" fill="#ff0000" shape-rendering="auto"/>
<rect x="942.2" y="403.0" width="1.1" height="24.7" fill="#008000" shape-rendering="auto"/><rect x="939.2" y="412.4" width="7" height="12.4" fill="#008000" shape-rendering="auto"/>
<rect x="949.2" y="409.0" width="1.1" height="27.7" fill="#ff0000" shape-rendering="auto"/><rect x="946.2" y="413.4" width="7" height="18.5" fill="#ff0000" shape-rendering="auto"/>
<rect x="956.3" y="425.3" width="1.1" height="13.5" fill="#ff0000" shape-rendering="auto"/><rect x="953.3" y="431.3" width="7" height="4.4" fill="#ff0000" shape-rendering="auto"/>
<rect x="963.4" y="434.9" width="1.1" height="28.3" fill="#ff0000" shape-rendering="auto"/><rect x="960.4" y="434.9" width="7" height="15.7" fill="#ff0000" shape-rendering="auto"/>
<rect x="970.4" y="415.4" width="1.1" height="35.3" fill="#008000" shape-rendering="auto"/><rect x="967.4" y="423.8" width="7" height="26.9" fill="#008000" shape-rendering="auto"/>
<rect x="977.5" y="405.4" width="1.1" height="31.3" fill="#008000" shape-rendering="auto"/><rect x="974.5" y="408.8" width="7" height="15.9" fill="#008000" shape-rendering="auto"/>
<rect x="984.5" y="406.8" width="1.1" height="14.5" fill="#008000" shape-rendering="auto"/><rect x="981.5" y="407.4" width="7" height="3.4" fill="#008000" shape-rendering="auto"/>
<rect x="991.6" y="402.0" width="1.1" height="11.8" fill="#008000" shape-rendering="auto"/><rect x="988.6" y="402.4" width="7" height="6.0" fill="#008000" shape-rendering="auto"/>
<rect x="998.6" y="386.5" width="1.1" height="23.5" fill="#ff0000" shape-rendering="auto"/><rect x="995.6" y="401.0" width="7" height="6.0" fill="#ff0000" shape-rendering="auto"/>
<rect x="1005.7" y="395.5" width="1.1" height="18.3" fill="#ff0000" shape-rendering="auto"/><rect x="1002.7" y="407.4" width="7" height="2.4" fill="#ff0000" shape-rendering="auto"/>
<rect x="1012.8" y="377.9" width="1.1" height="34.9" fill="#008000" shape-rendering="auto"/><rect x="1009.8" y="397.1" width="7" height="12.7" fill="#008000" shape-rendering="auto"/>
<rect x="1019.8" y="369.2" width="1.1" height="27.9" fill="#008000" shape-rendering="auto"/><rect x="1016.8" y="387.1" width="7" height="10.0" fill="#008000" shape-rendering="auto"/>
<rect x="1026.9" y="362.0" width="1.1" height="40.8" fill="#008000" shape-rendering="auto"/><rect x="1023.9" y="367.2" width="7" height="22.3" fill="#008000" shape-rendering="auto"/>
<rect x="1033.9" y="333.7" width="1.1" height="45.2" fill="#ff0000" shape-rendering="auto"/><rect x="1030.9" y="366.0" width="7" height="7.2" fill="#ff0000" shape-rendering="auto"/>
<rect x="1041.0" y="348.7" width="1.1" height="28.9" fill="#008000" shape-rendering="auto"/><rect x="1038.0" y="358.6" width="7" height="14.5" fill="#008000" shape-rendering="auto"/>
<rect x="1048.1" y="346.2" width="1.1" height="34.3" fill="#008000" shape-rendering="auto"/><rect x="1045.1" y="352.0" width="7" height="9.0" fill="#008000" shape-rendering="auto"/>
<rect x="1055.1" y="281.3" width="1.1" height="81.3" fill="#008000" shape-rendering="auto"/><rect x="1052.1" y="301.8" width="7" height="51.2" fill="#008000" shape-rendering="auto"/>
<rect x="1062.2" y="258.6" width="1.1" height="51.2" fill="#008000" shape-rendering="auto"/><rect x="1059.2" y="292.8" width="7" height="10.0" fill="#008000" shape-rendering="auto"/>
<rect x="1069.2" y="283.5" width="1.1" height="32.7" fill="#008000" shape-rendering="auto"/><rect x="1066.2" y="290.8" width="7" height="3.0" fill="#008000" shape-rendering="auto"/>
<rect x="1076.3" y="284.9" width="1.1" height="27.5" fill="#ff0000" shape-rendering="auto"/><rect x="1073.3" y="290.4" width="7" height="9.8" fill="#ff0000" shape-rendering="auto"/>
<rect x="1083.4" y="292.2" width="1.1" height="38.8" fill="#ff0000" shape-rendering="auto"/><rect x="1080.4" y="299.2" width="7" height="23.5" fill="#ff0000" shape-rendering="auto"/>
<rect x="1090.4" y="320.1" width="1.1" height="13.5" fill="#008000" shape-rendering="auto"/><rect x="1087.4" y="320.7" width="7" height="2.0" fill="#008000" shape-rendering="auto"/>
<rect x="1097.5" y="312.4" width="1.1" height="54.2" fill="#ff0000" shape-rendering="auto"/><rect x="1094.5" y="320.1" width="7" height="43.4" fill="#ff0000" shape-rendering="auto"/>
<rect x="1104.5" y="329.1" width="1.1" height="37.5" fill="#008000" shape-rendering="auto"/><rect x="1101.5" y="335.7" width="7" height="29.3" fill="#008000" shape-rendering="auto"/>
<rect x="1111.6" y="330.3" width="1.1" height="13.3" fill="#008000" shape-rendering="auto"/><rect x="1108.6" y="332.1" width="7" height="5.0" fill="#008000" shape-rendering="auto"/>
<rect x="1118.7" y="317.7" width="1.1" height="24.9" fill="#008000" shape-rendering="auto"/><rect x="1115.7" y="319.1" width="7" height="13.5" fill="#008000" shape-rendering="auto"/>
<rect x="1125.7" y="319.1" width="1.1" height="34.5" fill="#ff0000" shape-rendering="auto"/><rect x="1122.7" y="319.1" width="7" height="26.5" fill="#ff0000" shape-rendering="auto"/>
<rect x="1132.8" y="301.2" width="1.1" height="44.4" fill="#008000" shape-rendering="auto"/><rect x="1129.8" y="320.7" width="7" height="24.9" fill="#008000" shape-rendering="auto"/>
<rect x="1139.8" y="314.7" width="1.1" height="19.9" fill="#ff0000" shape-rendering="auto"/><rect x="1136.8" y="320.7" width="7" height="6.0" fill="#ff0000" shape-rendering="auto"/>
<rect x="1146.9" y="323.7" width="1.1" height="18.5" fill="#ff0000" shape-rendering="auto"/><rect x="1143.9" y="325.1" width="7" height="1.6" fill="#ff0000" shape-rendering="auto"/>
<rect x="1153.9" y="321.3" width="1.1" height="28.3" fill="#ff0000" shape-rendering="auto"/><rect x="1150.9" y="328.1" width="7" height="14.5" fill="#ff0000" shape-rendering="auto"/>
<rect x="1161.0" y="337.3" width="1.1" height="76.5" fill="#ff0000" shape-rendering="auto"/><rect x="1158.0" y="341.6" width="7" height="69.1" fill="#ff0000" shape-rendering="auto"/>
<rect x="1168.1" y="408.9" width="1.1" height="36.3" fill="#ff0000" shape-rendering="auto"/><rect x="1165.1" y="409.9" width="7" height="25.9" fill="#ff0000" shape-rendering="auto"/>
<rect x="1175.1" y="435.2" width="1.1" height="31.5" fill="#ff0000" shape-rendering="auto"/><rect x="1172.1" y="436.2" width="7" height="11.0" fill="#ff0000" shape-rendering="auto"/>
<rect x="1182.2" y="443.1" width="1.1" height="33.5" fill="#ff0000" shape-rendering="auto"/><rect x="1179.2" y="446.1" width="7" height="23.5" fill="#ff0000" shape-rendering="auto"/>
<rect x="1189.2" y="450.1" width="1.1" height="51.4" fill="#ff0000" shape-rendering="auto"/><rect x="1186.2" y="468.6" width="7" height="21.9" fill="#ff0000" shape-rendering="auto"/>
<rect x="1196.3" y="485.6" width="1.1" height="42.2" fill="#ff0000" shape-rendering="auto"/><rect x="1193.3" y="490.0" width="7" height="25.9" fill="#ff0000" shape-rendering="auto"/>
<rect x="1203.4" y="479.2" width="1.1" height="39.6" fill="#008000" shape-rendering="auto"/><rect x="1200.4" y="488.6" width="7" height="27.3" fill="#008000" shape-rendering="auto"/>
<rect x="1210.4" y="471.6" width="1.1" height="53.8" fill="#ff0000" shape-rendering="auto"/><rect x="1207.4" y="488.6" width="7" height="30.9" fill="#ff0000" shape-rendering="auto"/>
<rect x="1217.5" y="478.2" width="1.1" height="54.6" fill="#008000" shape-rendering="auto"/><rect x="1214.5" y="481.2" width="7" height="38.2" fill="#008000" shape-rendering="auto"/>
<rect x="1224.5" y="445.1" width="1.1" height="50.0" fill="#008000" shape-rendering="auto"/><rect x="1221.5" y="452.3" width="7" height="28.7" fill="#008000" shape-rendering="auto"/>
<rect x="1231.6" y="451.3" width="1.1" height="50.2" fill="#ff0000" shape-rendering="auto"/><rect x="1228.6" y="452.3" width="7" height="47.6" fill="#ff0000" shape-rendering="auto"/>
<rect x="1238.7" y="462.1" width="1.1" height="60.8" fill="#008000" shape-rendering="auto"/><rect x="1235.7" y="468.6" width="7" height="30.9" fill="#008000" shape-rendering="auto"/>
<rect x="1245.7" y="465.3" width="1.1" height="39.8" fill="#ff0000" shape-rendering="auto"/><rect x="1242.7" y="468.6" width="7" height="30.9" fill="#ff0000" shape-rendering="auto"/>
<rect x="1252.8" y="487.0" width="1.1" height="31.9" fill="#ff0000" shape-rendering="auto"/><rect x="1249.8" y="498.5" width="7" height="12.4" fill="#ff0000" shape-rendering="auto"/>
<rect x="1259.8" y="504.1" width="1.1" height="46.2" fill="#ff0000" shape-rendering="auto"/><rect x="1256.8" y="509.9" width="7" height="27.1" fill="#ff0000" shape-rendering="auto"/>
<rect x="1266.9" y="523.0" width="1.1" height="30.9" fill="#008000" shape-rendering="auto"/><rect x="1263.9" y="523.8" width="7" height="13.1" fill="#008000" shape-rendering="auto"/>
<rect x="1273.9" y="473.0" width="1.1" height="56.0" fill="#008000" shape-rendering="auto"/><rect x="1270.9" y="478.6" width="7" height="46.2" fill="#008000" shape-rendering="auto"/>
<rect x="1281.0" y="468.2" width="1.1" height="16.7" fill="#008000" shape-rendering="auto"/><rect x="1278.0" y="468.6" width="7" height="11.0" fill="#008000" shape-rendering="auto"/>
<rect x="1288.1" y="431.8" width="1.1" height="43.2" fill="#008000" shape-rendering="auto"/><rect x="1285.1" y="433.4" width="7" height="37.3" fill="#008000" shape-rendering="auto"/>
<rect x="1295.1" y="384.0" width="1.1" height="53.8" fill="#008000" shape-rendering="auto"/><rect x="1292.1" y="406.1" width="7" height="29.9" fill="#008000" shape-rendering="auto"/>
<rect x="1302.2" y="381.6" width="1.1" height="32.3" fill="#008000" shape-rendering="auto"/><rect x="1299.2" y="389.6" width="7" height="17.5" fill="#008000" shape-rendering="auto"/>
<rect x="1309.2" y="369.1" width="1.1" height="39.8" fill="#008000" shape-rendering="auto"/><rect x="1306.2" y="369.7" width="7" height="21.3" fill="#008000" shape-rendering="auto"/>
<rect x="1316.3" y="353.7" width="1.1" height="39.2" fill="#ff0000" shape-rendering="auto"/><rect x="1313.3" y="367.3" width="7" height="15.9" fill="#ff0000" shape-rendering="auto"/>
<rect x="1323.4" y="353.7" width="1.1" height="29.9" fill="#008000" shape-rendering="auto"/><rect x="1320.4" y="373.7" width="7" height="8.4" fill="#008000" shape-rendering="auto"/>
<rect x="1330.4" y="333.4" width="1.1" height="45.6" fill="#008000" shape-rendering="auto"/><rect x="1327.4" y="365.1" width="7" height="9.6" fill="#008000" shape-rendering="auto"/>
<rect x="1337.5" y="355.1" width="1.1" height="21.5" fill="#008000" shape-rendering="auto"/><rect x="1334.5" y="358.3" width="7" height="7.4" fill="#008000" shape-rendering="auto"/>
<rect x="1344.5" y="335.2" width="1.1" height="27.5" fill="#008000" shape-rendering="auto"/><rect x="1341.5" y="340.4" width="7" height="18.9" fill="#008000" shape-rendering="auto"/>
<rect x="1351.6" y="332.2" width="1.1" height="43.0" fill="#ff0000" shape-rendering="auto"/><rect x="1348.6" y="340.4" width="7" height="20.3" fill="#ff0000" shape-rendering="auto"/>
<rect x="1358.7" y="342.2" width="1.1" height="19.5" fill="#008000" shape-rendering="auto"/><rect x="1355.7" y="345.8" width="7" height="13.9" fill="#008000" shape-rendering="auto"/>
<rect x="1365.7" y="345.2" width="1.1" height="20.5" fill="#ff0000" shape-rendering="auto"/><rect x="1362.7" y="345.4" width="7" height="20.3" fill="#ff0000" shape-rendering="auto"/>
<rect x="1372.8" y="351.2" width="1.1" height="17.9" fill="#ff0000" shape-rendering="auto"/><rect x="1369.8" y="365.1" width="7" height="2.0" fill="#ff0000" shape-rendering="auto"/>
<rect x="1379.8" y="362.7" width="1.1" height="16.3" fill="#ff0000" shape-rendering="auto"/><rect x="1376.8" y="364.7" width="7" height="1.4" fill="#ff0000" shape-rendering="auto"/>
<rect x="1386.9" y="347.2" width="1.1" height="18.5" fill="#008000" shape-rendering="auto"/><rect x="1383.9" y="363.7" width="7" height="2.0" fill="#008000" shape-rendering="auto"/>
<rect x="1394.0" y="353.7" width="1.1" height="18.9" fill="#ff0000" shape-rendering="auto"/><rect x="1391.0" y="363.3" width="7" height="3.8" fill="#ff0000" shape-rendering="auto"/>
<rect x="1401.0" y="357.7" width="1.1" height="42.2" fill="#ff0000" shape-rendering="auto"/><rect x="1398.0" y="367.3" width="7" height="32.7" fill="#ff0000" shape-rendering="auto"/>
<rect x="1408.1" y="389.0" width="1.1" height="18.9" fill="#ff0000" shape-rendering="auto"/><rect x="1405.1" y="398.6" width="7" height="8.6" fill="#ff0000" shape-rendering="auto"/>
<rect x="1415.1" y="404.1" width="1.1" height="12.4" fill="#ff0000" shape-rendering="auto"/><rect x="1412.1" y="406.1" width="7" height="8.8" fill="#ff0000" shape-rendering="auto"/>
<rect x="1422.2" y="396.6" width="1.1" height="19.9" fill="#008000" shape-rendering="auto"/><rect x="1419.2" y="402.2" width="7" height="11.4" fill="#008000" shape-rendering="auto"/>
<rect x="1429.2" y="391.6" width="1.1" height="21.3" fill="#008000" shape-rendering="auto"/><rect x="1426.2" y="398.6" width="7" height="5.0" fill="#008000" shape-rendering="auto"/>
<rect x="1436.3" y="391.6" width="1.1" height="8.4" fill="#008000" shape-rendering="auto"/><rect x="1433.3" y="392.2" width="7" height="7.8" fill="#008000" shape-rendering="auto"/>
<rect x="1443.4" y="389.0" width="1.1" height="12.5" fill="#ff0000" shape-rendering="auto"/><rect x="1440.4" y="392.2" width="7" height="8.8" fill="#ff0000" shape-rendering="auto"/>
<rect x="1450.4" y="399.6" width="1.1" height="13.3" fill="#ff0000" shape-rendering="auto"/><rect x="1447.4" y="399.6" width="7" height="10.4" fill="#ff0000" shape-rendering="auto"/>
<rect x="1457.5" y="401.6" width="1.1" height="7.6" fill="#008000" shape-rendering="auto"/><rect x="1454.5" y="403.5" width="7" height="5.4" fill="#008000" shape-rendering="auto"/>
<rect x="1464.5" y="389.0" width="1.1" height="16.1" fill="#008000" shape-rendering="auto"/><rect x="1461.5" y="395.0" width="7" height="10.0" fill="#008000" shape-rendering="auto"/>
<rect x="1471.6" y="385.0" width="1.1" height="13.1" fill="#008000" shape-rendering="auto"/><rect x="1468.6" y="390.0" width="7" height="6.0" fill="#008000" shape-rendering="auto"/>
<rect x="1478.7" y="381.6" width="1.1" height="17.3" fill="#008000" shape-rendering="auto"/><rect x="1475.7" y="382.0" width="7" height="10.0" fill="#008000" shape-rendering="auto"/>
<rect x="1485.7" y="377.6" width="1.1" height="13.9" fill="#ff0000" shape-rendering="auto"/><rect x="1482.7" y="383.2" width="7" height="7.8" fill="#ff0000" shape-rendering="auto"/>
<rect x="1492.8" y="379.0" width="1.1" height="11.0" fill="#008000" shape-rendering="auto"/><rect x="1489.8" y="386.0" width="7" height="4.0" fill="#008000" shape-rendering="auto"/>
<rect x="1499.8" y="382.6" width="1.1" height="10.4" fill="#ff0000" shape-rendering="auto"/><rect x="1496.8" y="386.0" width="7" height="6.0" fill="#ff0000" shape-rendering="auto"/>
<rect x="1506.9" y="384.2" width="1.1" height="18.7" fill="#008000" shape-rendering="auto"/><rect x="1503.9" y="385.0" width="7" height="7.0" fill="#008000" shape-rendering="auto"/>
<rect x="1514.0" y="384.2" width="1.1" height="14.9" fill="#ff0000" shape-rendering="auto"/><rect x="1511.0" y="384.6" width="7" height="13.9" fill="#ff0000" shape-rendering="auto"/>
<rect x="1521.0" y="377.1" width="1.1" height="20.9" fill="#008000" shape-rendering="auto"/><rect x="1518.0" y="377.1" width="7" height="20.1" fill="#008000" shape-rendering="auto"/>
<rect x="1528.1" y="360.1" width="1.1" height="23.9" fill="#008000" shape-rendering="auto"/><rect x="1525.1" y="376.1" width="7" height="2.0" fill="#008000" shape-rendering="auto"/>
<rect x="1535.1" y="369.1" width="1.1" height="14.5" fill="#ff0000" shape-rendering="auto"/><rect x="1532.1" y="376.1" width="7" height="6.0" fill="#ff0000" shape-rendering="auto"/>
<rect x="1542.2" y="380.6" width="1.1" height="15.3" fill="#ff0000" shape-rendering="auto"/><rect x="1539.2" y="381.0" width="7" height="14.9" fill="#ff0000" shape-rendering="auto"/>
<rect x="1549.2" y="371.7" width="1.1" height="24.9" fill="#008000" shape-rendering="auto"/><rect x="1546.2" y="372.1" width="7" height="23.9" fill="#008000" shape-rendering="auto"/>
<rect x="1556.3" y="366.7" width="1.1" height="11.0" fill="#008000" shape-rendering="auto"/><rect x="1553.3" y="370.1" width="7" height="3.2" fill="#008000" shape-rendering="auto"/>
<rect x="1563.4" y="368.1" width="1.1" height="8.6" fill="#008000" shape-rendering="auto"/><rect x="1560.4" y="370.7" width="7" height="1.0" fill="#008000" shape-rendering="auto"/>
<rect x="1570.4" y="370.3" width="1.1" height="19.3" fill="#ff0000" shape-rendering="auto"/><rect x="1567.4" y="371.1" width="7" height="18.5" fill="#ff0000" shape-rendering="auto"/>
<rect x="1577.5" y="385.6" width="1.1" height="6.0" fill="#ff0000" shape-rendering="auto"/><rect x="1574.5" y="387.6" width="7" height="3.0" fill="#ff0000" shape-rendering="auto"/>
<rect x="1584.5" y="379.0" width="1.1" height="16.1" fill="#008000" shape-rendering="auto"/><rect x="1581.5" y="383.6" width="7" height="6.0" fill="#008000" shape-rendering="auto"/>
<rect x="1591.6" y="375.3" width="1.1" height="8.4" fill="#008000" shape-rendering="auto"/><rect x="1588.6" y="378.6" width="7" height="4.6" fill="#008000" shape-rendering="auto"/>
<rect x="1598.7" y="373.3" width="1.1" height="8.4" fill="#008000" shape-rendering="auto"/><rect x="1595.7" y="375.3" width="7" height="5.4" fill="#008000" shape-rendering="auto"/>
<rect x="1605.7" y="361.7" width="1.1" height="13.9" fill="#008000" shape-rendering="auto"/><rect x="1602.7" y="372.1" width="7" height="3.6" fill="#008000" shape-rendering="auto"/>
<rect x="1612.8" y="372.1" width="1.1" height="7.6" fill="#ff0000" shape-rendering="auto"/><rect x="1609.8" y="372.1" width="7" height="7.6" fill="#ff0000" shape-rendering="auto"/>
<rect x="1619.8" y="362.7" width="1.1" height="21.3" fill="#008000" shape-rendering="auto"/><rect x="1616.8" y="363.7" width="7" height="15.9" fill="#008000" shape-rendering="auto"/>
<rect x="1626.9" y="360.1" width="1.1" height="10.2" fill="#ff0000" shape-rendering="auto"/><rect x="1623.9" y="363.7" width="7" height="2.0" fill="#ff0000" shape-rendering="auto"/>
<rect x="1634.0" y="364.3" width="1.1" height="7.0" fill="#ff0000" shape-rendering="auto"/><rect x="1631.0" y="366.1" width="7" height="4.6" fill="#ff0000" shape-rendering="auto"/>
<rect x="1641.0" y="363.1" width="1.1" height="10.2" fill="#ff0000" shape-rendering="auto"/><rect x="1638.0" y="371.3" width="7" height="2.0" fill="#ff0000" shape-rendering="auto"/>
<rect x="1648.1" y="364.3" width="1.1" height="9.0" fill="#008000" shape-rendering="auto"/><rect x="1645.1" y="366.1" width="7" height="7.2" fill="#008000" shape-rendering="auto"/>
<rect x="1655.1" y="364.3" width="1.1" height="7.0" fill="#ff0000" shape-rendering="auto"/><rect x="1652.1" y="366.1" width="7" height="4.6" fill="#ff0000" shape-rendering="auto"/>
<rect x="1662.2" y="365.3" width="1.1" height="12.4" fill="#008000" shape-rendering="auto"/><rect x="1659.2" y="366.1" width="7" height="4.6" fill="#008000" shape-rendering="auto"/>
<rect x="1669.3" y="363.1" width="1.1" height="19.5" fill="#008000" shape-rendering="auto"/><rect x="1666.3" y="365.1" width="7" height="1.6" fill="#008000" shape-rendering="auto"/>
<rect x="1676.3" y="365.3" width="1.1" height="34.3" fill="#ff0000" shape-rendering="auto"/><rect x="1673.3" y="366.1" width="7" height="33.5" fill="#ff0000" shape-rendering="auto"/>
<rect x="1683.4" y="380.2" width="1.1" height="19.3" fill="#008000" shape-rendering="auto"/><rect x="1680.4" y="387.6" width="7" height="12.0" fill="#008000" shape-rendering="auto"/>
<rect x="1690.4" y="373.3" width="1.1" height="16.9" fill="#008000" shape-rendering="auto"/><rect x="1687.4" y="378.6" width="7" height="9.6" fill="#008000" shape-rendering="auto"/>
<rect x="1697.5" y="348.8" width="1.1" height="29.9" fill="#008000" shape-rendering="auto"/><rect x="1694.5" y="352.2" width="7" height="26.1" fill="#008000" shape-rendering="auto"/>
<rect x="1704.5" y="341.2" width="1.1" height="27.5" fill="#008000" shape-rendering="auto"/><rect x="1701.5" y="344.2" width="7" height="8.6" fill="#008000" shape-rendering="auto"/>
<rect x="1711.6" y="328.4" width="1.1" height="50.6" fill="#ff0000" shape-rendering="auto"/><rect x="1708.6" y="344.2" width="7" height="30.5" fill="#ff0000" shape-rendering="auto"/>
<rect x="1718.7" y="356.7" width="1.1" height="22.3" fill="#008000" shape-rendering="auto"/><rect x="1715.7" y="367.3" width="7" height="6.0" fill="#008000" shape-rendering="auto"/>
<rect x="1725.7" y="352.4" width="1.1" height="37.8" fill="#ff0000" shape-rendering="auto"/><rect x="1722.7" y="367.3" width="7" height="18.7" fill="#ff0000" shape-rendering="auto"/>
<rect x="1732.8" y="378.1" width="1.1" height="57.4" fill="#ff0000" shape-rendering="auto"/><rect x="1729.8" y="385.1" width="7" height="45.8" fill="#ff0000" shape-rendering="auto"/>
<rect x="1739.8" y="407.0" width="1.1" height="24.9" fill="#008000" shape-rendering="auto"/><rect x="1736.8" y="415.2" width="7" height="16.7" fill="#008000" shape-rendering="auto"/>
<rect x="1746.9" y="390.3" width="1.1" height="32.3" fill="#008000" shape-rendering="auto"/><rect x="1743.9" y="401.2" width="7" height="14.7" fill="#008000" shape-rendering="auto"/>
<rect x="1754.0" y="371.8" width="1.1" height="47.2" fill="#008000" shape-rendering="auto"/><rect x="1751.0" y="397.1" width="7" height="5.0" fill="#008000" shape-rendering="auto"/>
<rect x="1761.0" y="389.3" width="1.1" height="37.3" fill="#ff0000" shape-rendering="auto"/><rect x="1758.0" y="397.1" width="7" height="26.1" fill="#ff0000" shape-rendering="auto"/>
<rect x="1768.1" y="417.0" width="1.1" height="30.9" fill="#ff0000" shape-rendering="auto"/><rect x="1765.1" y="422.2" width="7" height="23.9" fill="#ff0000" shape-rendering="auto"/>
<rect x="1775.1" y="434.1" width="1.1" height="18.7" fill="#008000" shape-rendering="auto"/><rect x="1772.1" y="438.5" width="7" height="7.6" fill="#008000" shape-rendering="auto"/>
<rect x="1782.2" y="438.1" width="1.1" height="26.7" fill="#ff0000" shape-rendering="auto"/><rect x="1779.2" y="438.5" width="7" height="26.3" fill="#ff0000" shape-rendering="auto"/>
<rect x="1789.3" y="459.4" width="1.1" height="11.0" fill="#ff0000" shape-rendering="auto"/><rect x="1786.3" y="463.4" width="7" height="5.0" fill="#ff0000" shape-rendering="auto"/>
<rect x="1796.3" y="460.4" width="1.1" height="16.3" fill="#ff0000" shape-rendering="auto"/><rect x="1793.3" y="467.4" width="7" height="6.0" fill="#ff0000" shape-rendering="auto"/>
<rect x="1803.4" y="468.0" width="1.1" height="10.0" fill="#008000" shape-rendering="auto"/><rect x="1800.4" y="471.4" width="7" height="1.6" fill="#008000" shape-rendering="auto"/>
<rect x="1810.4" y="472.0" width="1.1" height="7.0" fill="#ff0000" shape-rendering="auto"/><rect x="1807.4" y="472.4" width="7" height="2.0" fill="#ff0000" shape-rendering="auto"/>
<rect x="1817.5" y="469.0" width="1.1" height="12.7" fill="#ff0000" shape-rendering="auto"/><rect x="1814.5" y="473.7" width="7" height="3.2" fill="#ff0000" shape-rendering="auto"/>
<rect x="1824.5" y="459.0" width="1.1" height="21.3" fill="#008000" shape-rendering="auto"/><rect x="1821.5" y="459.0" width="7" height="16.9" fill="#008000" shape-rendering="auto"/>
<line x1="409.6" y1="458.4" x2="1827.6" y2="458.4" stroke="#d2d2d2" stroke-width="1" shape-rendering="auto"/>
<rect x="413" y="624" width="1411.5" height="50" fill="#808080"/>
<text x="485.0" y="668.6" textLength="35.6" lengthAdjust="spacing" font-family="Liberation Sans, sans-serif" font-size="15" fill="#fff" shape-rendering="auto">11:45</text>
<text x="555.6" y="668.6" textLength="35.6" lengthAdjust="spacing" font-family="Liberation Sans, sans-serif" font-size="15" fill="#fff" shape-rendering="auto">14:15</text>
<text x="626.2" y="668.6" textLength="35.6" lengthAdjust="spacing" font-family="Liberation Sans, sans-serif" font-size="15" fill="#fff" shape-rendering="auto">16:45</text>
<text x="696.8" y="668.6" textLength="35.6" lengthAdjust="spacing" font-family="Liberation Sans, sans-serif" font-size="15" fill="#fff" shape-rendering="auto">19:15</text>
<text x="767.4" y="668.6" textLength="35.6" lengthAdjust="spacing" font-family="Liberation Sans, sans-serif" font-size="15" fill="#fff" shape-rendering="auto">21:45</text>
<text x="838.0" y="668.6" textLength="36.2" lengthAdjust="spacing" font-family="Liberation Sans, sans-serif" font-size="15" fill="#fff" shape-rendering="auto">Feb 6</text>
<text x="908.6" y="668.6" textLength="35.6" lengthAdjust="spacing" font-family="Liberation Sans, sans-serif" font-size="15" fill="#fff" shape-rendering="auto">02:45</text>
<text x="979.2" y="668.6" textLength="35.6" lengthAdjust="spacing" font-family="Liberation Sans, sans-serif" font-size="15" fill="#fff" shape-rendering="auto">05:15</text>
<text x="1049.8" y="668.6" textLength="35.6" lengthAdjust="spacing" font-family="Liberation Sans, sans-serif" font-size="15" fill="#fff" shape-rendering="auto">07:45</text>
<text x="1120.4" y="668.6" textLength="35.6" lengthAdjust="spacing" font-family="Liberation Sans, sans-serif" font-size="15" fill="#fff" shape-rendering="auto">10:15</text>
<text x="1190.9" y="668.6" textLength="35.6" lengthAdjust="spacing" font-family="Liberation Sans, sans-serif" font-size="15" fill="#fff" shape-rendering="auto">12:45</text>
<text x="1261.5" y="668.6" textLength="35.6" lengthAdjust="spacing" font-family="Liberation Sans, sans-serif" font-size="15" fill="#fff" shape-rendering="auto">15:15</text>
<text x="1332.1" y="668.6" textLength="35.6" lengthAdjust="spacing" font-family="Liberation Sans, sans-serif" font-size="15" fill="#fff" shape-rendering="auto">17:45</text>
<text x="1402.7" y="668.6" textLength="35.6" lengthAdjust="spacing" font-family="Liberation Sans, sans-serif" font-size="15" fill="#fff" shape-rendering="auto">20:15</text>
<text x="1473.3" y="668.6" textLength="35.6" lengthAdjust="spacing" font-family="Liberation Sans, sans-serif" font-size="15" fill="#fff" shape-rendering="auto">22:45</text>
<text x="1543.9" y="668.6" textLength="36.2" lengthAdjust="spacing" font-family="Liberation Sans, sans-serif" font-size="15" fill="#fff" shape-rendering="auto">Feb 7</text>
<text x="1614.5" y="668.6" textLength="35.6" lengthAdjust="spacing" font-family="Liberation Sans, sans-serif" font-size="15" fill="#fff" shape-rendering="auto">03:45</text>
<text x="1685.1" y="668.6" textLength="35.6" lengthAdjust="spacing" font-family="Liberation Sans, sans-serif" font-size="15" fill="#fff" shape-rendering="auto">06:15</text>
<text x="1755.7" y="668.6" textLength="35.6" lengthAdjust="spacing" font-family="Liberation Sans, sans-serif" font-size="15" fill="#fff" shape-rendering="auto">08:45</text>
<path d="M413.5,626.0 L420.3,628.3 L427.4,628.8 L434.4,625.9 L441.5,627.0 L448.5,626.4 L455.6,628.3 L462.7,629.1 L469.7,629.6 L476.8,629.0 L483.8,632.6 L490.9,634.5 L498.0,633.5 L505.0,633.3 L512.1,634.8 L519.1,634.9 L526.2,633.5 L533.3,634.3 L540.3,635.7 L547.4,641.5 L554.4,641.3 L561.5,645.4 L568.5,644.4 L575.6,643.1 L582.7,639.6 L589.7,640.1 L596.8,640.9 L603.8,642.3 L610.9,642.4 L618.0,644.1 L625.0,642.0 L632.1,642.9 L639.1,641.7 L646.2,641.1 L653.3,638.2 L660.3,642.6 L667.4,641.9 L674.4,640.7 L681.5,640.5 L688.6,643.9 L695.6,643.3 L702.7,647.8 L709.7,647.2 L716.8,644.5 L723.8,644.0 L730.9,642.9 L738.0,650.6 L745.0,649.0 L752.1,649.2 L759.1,649.7 L766.2,656.9 L773.3,654.6 L780.3,653.3 L787.4,652.2 L794.4,654.3 L801.5,653.6 L808.6,652.5 L815.6,655.7 L822.7,657.1 L829.7,654.2 L836.8,653.0 L843.8,651.7 L850.9,652.0 L858.0,651.6 L865.0,650.8 L872.1,652.3 L879.1,654.4 L886.2,658.3 L893.3,658.8 L900.3,657.0 L907.4,655.6 L914.4,655.5 L921.5,654.6 L928.6,655.7 L935.6,656.9 L942.7,655.4 L949.7,657.8 L956.8,658.3 L963.9,660.1 L970.9,656.8 L978.0,655.0 L985.0,654.8 L992.1,654.2 L999.1,654.8 L1006.2,655.1 L1013.3,653.5 L1020.3,652.3 L1027.4,649.9 L1034.4,650.6 L1041.5,648.8 L1048.6,648.0 L1055.6,641.9 L1062.7,640.8 L1069.7,640.5 L1076.8,641.7 L1083.9,644.4 L1090.9,644.2 L1098.0,649.4 L1105.0,646.0 L1112.1,645.6 L1119.2,644.0 L1126.2,647.2 L1133.3,644.2 L1140.3,644.9 L1147.4,644.9 L1154.4,646.9 L1161.5,655.2 L1168.6,658.3 L1175.6,659.7 L1182.7,662.4 L1189.7,665.0 L1196.8,668.1 L1203.9,664.7 L1210.9,668.5 L1218.0,663.8 L1225.0,660.3 L1232.1,666.1 L1239.2,662.3 L1246.2,666.1 L1253.3,667.5 L1260.3,670.7 L1267.4,669.1 L1274.4,663.5 L1281.5,662.3 L1288.6,658.0 L1295.6,654.6 L1302.7,652.6 L1309.7,650.2 L1316.8,651.8 L1323.9,650.7 L1330.9,649.6 L1338.0,648.8 L1345.0,646.6 L1352.1,649.1 L1359.2,647.2 L1366.2,649.7 L1373.3,649.9 L1380.3,649.7 L1387.4,649.4 L1394.5,649.9 L1401.5,653.9 L1408.6,654.8 L1415.6,655.7 L1422.7,654.2 L1429.7,653.7 L1436.8,652.9 L1443.9,654.0 L1450.9,655.1 L1458.0,654.3 L1465.0,653.3 L1472.1,652.7 L1479.2,651.7 L1486.2,652.8 L1493.3,652.2 L1500.3,652.9 L1507.4,652.1 L1514.5,653.7 L1521.5,651.1 L1528.6,651.0 L1535.6,651.7 L1542.7,653.4 L1549.7,650.5 L1556.8,650.2 L1563.9,650.3 L1570.9,652.6 L1578.0,652.7 L1585.0,651.9 L1592.1,651.3 L1599.2,650.9 L1606.2,650.5 L1613.3,651.4 L1620.3,649.4 L1627.4,649.7 L1634.5,650.3 L1641.5,650.6 L1648.6,649.7 L1655.6,650.3 L1662.7,649.7 L1669.8,649.6 L1676.8,653.8 L1683.9,652.4 L1690.9,651.3 L1698.0,648.0 L1705.0,647.0 L1712.1,650.8 L1719.2,649.9 L1726.2,652.2 L1733.3,657.7 L1740.3,655.8 L1747.4,654.0 L1754.5,653.5 L1761.5,656.7 L1768.6,659.5 L1775.6,658.6 L1782.7,661.8 L1789.8,662.3 L1796.8,662.9 L1803.9,662.6 L1810.9,663.0 L1818.0,663.3 L1824.0,661.1 L1824.0,674 L413.5,674 Z" fill="rgba(255,60,0,0.52)" shape-rendering="auto"/>
<path d="M413.5,626.0 L420.3,628.3 L427.4,628.8 L434.4,625.9 L441.5,627.0 L448.5,626.4 L455.6,628.3 L462.7,629.1 L469.7,629.6 L476.8,629.0 L483.8,632.6 L490.9,634.5 L498.0,633.5 L505.0,633.3 L512.1,634.8 L519.1,634.9 L526.2,633.5 L533.3,634.3 L540.3,635.7 L547.4,641.5 L554.4,641.3 L561.5,645.4 L568.5,644.4 L575.6,643.1 L582.7,639.6 L589.7,640.1 L596.8,640.9 L603.8,642.3 L610.9,642.4 L618.0,644.1 L625.0,642.0 L632.1,642.9 L639.1,641.7 L646.2,641.1 L653.3,638.2 L660.3,642.6 L667.4,641.9 L674.4,640.7 L681.5,640.5 L688.6,643.9 L695.6,643.3 L702.7,647.8 L709.7,647.2 L716.8,644.5 L723.8,644.0 L730.9,642.9 L738.0,650.6 L745.0,649.0 L752.1,649.2 L759.1,649.7 L766.2,656.9 L773.3,654.6 L780.3,653.3 L787.4,652.2 L794.4,654.3 L801.5,653.6 L808.6,652.5 L815.6,655.7 L822.7,657.1 L829.7,654.2 L836.8,653.0 L843.8,651.7 L850.9,652.0 L858.0,651.6 L865.0,650.8 L872.1,652.3 L879.1,654.4 L886.2,658.3 L893.3,658.8 L900.3,657.0 L907.4,655.6 L914.4,655.5 L921.5,654.6 L928.6,655.7 L935.6,656.9 L942.7,655.4 L949.7,657.8 L956.8,658.3 L963.9,660.1 L970.9,656.8 L978.0,655.0 L985.0,654.8 L992.1,654.2 L999.1,654.8 L1006.2,655.1 L1013.3,653.5 L1020.3,652.3 L1027.4,649.9 L1034.4,650.6 L1041.5,648.8 L1048.6,648.0 L1055.6,641.9 L1062.7,640.8 L1069.7,640.5 L1076.8,641.7 L1083.9,644.4 L1090.9,644.2 L1098.0,649.4 L1105.0,646.0 L1112.1,645.6 L1119.2,644.0 L1126.2,647.2 L1133.3,644.2 L1140.3,644.9 L1147.4,644.9 L1154.4,646.9 L1161.5,655.2 L1168.6,658.3 L1175.6,659.7 L1182.7,662.4 L1189.7,665.0 L1196.8,668.1 L1203.9,664.7 L1210.9,668.5 L1218.0,663.8 L1225.0,660.3 L1232.1,666.1 L1239.2,662.3 L1246.2,666.1 L1253.3,667.5 L1260.3,670.7 L1267.4,669.1 L1274.4,663.5 L1281.5,662.3 L1288.6,658.0 L1295.6,654.6 L1302.7,652.6 L1309.7,650.2 L1316.8,651.8 L1323.9,650.7 L1330.9,649.6 L1338.0,648.8 L1345.0,646.6 L1352.1,649.1 L1359.2,647.2 L1366.2,649.7 L1373.3,649.9 L1380.3,649.7 L1387.4,649.4 L1394.5,649.9 L1401.5,653.9 L1408.6,654.8 L1415.6,655.7 L1422.7,654.2 L1429.7,653.7 L1436.8,652.9 L1443.9,654.0 L1450.9,655.1 L1458.0,654.3 L1465.0,653.3 L1472.1,652.7 L1479.2,651.7 L1486.2,652.8 L1493.3,652.2 L1500.3,652.9 L1507.4,652.1 L1514.5,653.7 L1521.5,651.1 L1528.6,651.0 L1535.6,651.7 L1542.7,653.4 L1549.7,650.5 L1556.8,650.2 L1563.9,650.3 L1570.9,652.6 L1578.0,652.7 L1585.0,651.9 L1592.1,651.3 L1599.2,650.9 L1606.2,650.5 L1613.3,651.4 L1620.3,649.4 L1627.4,649.7 L1634.5,650.3 L1641.5,650.6 L1648.6,649.7 L1655.6,650.3 L1662.7,649.7 L1669.8,649.6 L1676.8,653.8 L1683.9,652.4 L1690.9,651.3 L1698.0,648.0 L1705.0,647.0 L1712.1,650.8 L1719.2,649.9 L1726.2,652.2 L1733.3,657.7 L1740.3,655.8 L1747.4,654.0 L1754.5,653.5 L1761.5,656.7 L1768.6,659.5 L1775.6,658.6 L1782.7,661.8 L1789.8,662.3 L1796.8,662.9 L1803.9,662.6 L1810.9,663.0 L1818.0,663.3 L1824.0,661.1" fill="none" stroke="#ff4208" stroke-width="1.5" shape-rendering="auto"/>
<path d="M413,624.5 H1824.5" fill="none" stroke="#c4c4c4" stroke-width="1" shape-rendering="auto"/>
<path d="M410,624.5 H413.2 V673.4 H1824.3 V624.5 H1828.0" fill="none" stroke="#fff" stroke-width="1.3" shape-rendering="auto"/>
<rect x="1828.2" y="450.6" width="44.8" height="16" fill="#fff"/>
</svg>
<span class="t" style="left:421.00px;top:103.80px;color:#fff;"><span style="letter-spacing:-0.072px">open:</span></span>
<span class="t" style="left:463.30px;top:103.80px;color:#ff0000;"><span class="w" style="width:51.77px"><span class="x" style="transform:scaleX(0.9545)">1.24738</span></span></span>
<span class="t" style="left:522.30px;top:103.80px;color:#fff;"><span style="letter-spacing:0.030px">high:</span></span>
<span class="t" style="left:560.20px;top:103.80px;color:#ff0000;"><span class="w" style="width:51.77px"><span class="x" style="transform:scaleX(0.9545)">1.24749</span></span></span>
<span class="t" style="left:618.90px;top:103.80px;color:#fff;"><span style="letter-spacing:-0.047px">low:</span></span>
<span class="t" style="left:650.70px;top:103.80px;color:#ff0000;"><span class="w" style="width:51.77px"><span class="x" style="transform:scaleX(0.9545)">1.24658</span></span></span>
<span class="t" style="left:709.70px;top:103.80px;color:#fff;"><span class="w" style="width:36.81px"><span class="x" style="transform:scaleX(0.9394)">close:</span></span></span>
<span class="t" style="left:751.70px;top:103.80px;color:#ff0000;"><span class="w" style="width:51.77px"><span class="x" style="transform:scaleX(0.9545)">1.24698</span></span></span>
<span class="t" style="left:1654.82px;top:103.80px;color:#fff;"><span class="w" style="width:23.98px"><span class="x" style="transform:scaleX(0.9273)">Feb</span></span><span style="letter-spacing:-0.063px"> </span><span class="w" style="width:11.34px"><span class="x" style="transform:scaleX(0.9059)">5,</span></span><span style="letter-spacing:-0.063px"> </span><span class="w" style="width:35.60px"><span class="x" style="transform:scaleX(0.9480)">09:15</span></span><span style="letter-spacing:-0.063px"> </span><span style="letter-spacing:0.999px">-</span><span style="letter-spacing:-0.063px"> </span><span class="w" style="width:23.98px"><span class="x" style="transform:scaleX(0.9273)">Feb</span></span><span style="letter-spacing:-0.063px"> </span><span class="w" style="width:11.34px"><span class="x" style="transform:scaleX(0.9059)">7,</span></span><span style="letter-spacing:-0.063px"> </span><span class="w" style="width:35.60px"><span class="x" style="transform:scaleX(0.9480)">11:30</span></span></span>
<span class="t" style="left:1839.60px;top:147.80px;color:#fff;"><span class="w" style="width:51.77px"><span class="x" style="transform:scaleX(0.9545)">1.24764</span></span></span>
<span class="t" style="left:1839.60px;top:180.80px;color:#fff;"><span class="w" style="width:51.77px"><span class="x" style="transform:scaleX(0.9545)">1.24629</span></span></span>
<span class="t" style="left:1839.60px;top:213.80px;color:#fff;"><span class="w" style="width:51.77px"><span class="x" style="transform:scaleX(0.9545)">1.24493</span></span></span>
<span class="t" style="left:1839.60px;top:246.80px;color:#fff;"><span class="w" style="width:51.77px"><span class="x" style="transform:scaleX(0.9545)">1.24357</span></span></span>
<span class="t" style="left:1839.60px;top:279.80px;color:#fff;"><span class="w" style="width:51.77px"><span class="x" style="transform:scaleX(0.9545)">1.24221</span></span></span>
<span class="t" style="left:1839.60px;top:312.80px;color:#fff;"><span class="w" style="width:51.77px"><span class="x" style="transform:scaleX(0.9545)">1.24086</span></span></span>
<span class="t" style="left:1839.60px;top:345.80px;color:#fff;"><span class="w" style="width:51.77px"><span class="x" style="transform:scaleX(0.9545)">1.23950</span></span></span>
<span class="t" style="left:1839.60px;top:378.80px;color:#fff;"><span class="w" style="width:51.77px"><span class="x" style="transform:scaleX(0.9545)">1.23814</span></span></span>
<span class="t" style="left:1839.60px;top:411.80px;color:#fff;"><span class="w" style="width:51.77px"><span class="x" style="transform:scaleX(0.9545)">1.23679</span></span></span>
<span class="t" style="left:1839.60px;top:444.80px;color:#fff;"><span class="w" style="width:51.77px"><span class="x" style="transform:scaleX(0.9545)">1.23543</span></span></span>
<span class="t" style="left:1839.60px;top:477.80px;color:#fff;"><span class="w" style="width:51.77px"><span class="x" style="transform:scaleX(0.9545)">1.23407</span></span></span>
<span class="t" style="left:1839.60px;top:510.80px;color:#fff;"><span class="w" style="width:51.77px"><span class="x" style="transform:scaleX(0.9545)">1.23271</span></span></span>
<span class="t" style="left:1839.60px;top:543.80px;color:#fff;"><span class="w" style="width:51.77px"><span class="x" style="transform:scaleX(0.9545)">1.23136</span></span></span>
<span class="t" style="left:1830.20px;top:448.84px;color:#1f8a1f;font-size:12px;"><span class="w" style="width:40.80px"><span class="x" style="transform:scaleX(0.9403)">1.23529</span></span></span>
<span class="t" style="left:466.04px;top:597.60px;color:#fff;"><span class="w" style="width:35.60px"><span class="x" style="transform:scaleX(0.9480)">11:45</span></span></span>
<span class="t" style="left:536.63px;top:597.60px;color:#fff;"><span class="w" style="width:35.60px"><span class="x" style="transform:scaleX(0.9480)">14:15</span></span></span>
<span class="t" style="left:607.22px;top:597.60px;color:#fff;"><span class="w" style="width:35.60px"><span class="x" style="transform:scaleX(0.9480)">16:45</span></span></span>
<span class="t" style="left:677.81px;top:597.60px;color:#fff;"><span class="w" style="width:35.60px"><span class="x" style="transform:scaleX(0.9480)">19:15</span></span></span>
<span class="t" style="left:748.40px;top:597.60px;color:#fff;"><span class="w" style="width:35.60px"><span class="x" style="transform:scaleX(0.9480)">21:45</span></span></span>
<span class="t" style="left:818.70px;top:597.60px;color:#fff;"><span class="w" style="width:23.98px"><span class="x" style="transform:scaleX(0.9273)">Feb</span></span><span style="letter-spacing:-0.063px"> </span><span style="letter-spacing:-0.258px">6</span></span>
<span class="t" style="left:889.58px;top:597.60px;color:#fff;"><span class="w" style="width:35.60px"><span class="x" style="transform:scaleX(0.9480)">02:45</span></span></span>
<span class="t" style="left:960.17px;top:597.60px;color:#fff;"><span class="w" style="width:35.60px"><span class="x" style="transform:scaleX(0.9480)">05:15</span></span></span>
<span class="t" style="left:1030.76px;top:597.60px;color:#fff;"><span class="w" style="width:35.60px"><span class="x" style="transform:scaleX(0.9480)">07:45</span></span></span>
<span class="t" style="left:1101.35px;top:597.60px;color:#fff;"><span class="w" style="width:35.60px"><span class="x" style="transform:scaleX(0.9480)">10:15</span></span></span>
<span class="t" style="left:1171.94px;top:597.60px;color:#fff;"><span class="w" style="width:35.60px"><span class="x" style="transform:scaleX(0.9480)">12:45</span></span></span>
<span class="t" style="left:1242.53px;top:597.60px;color:#fff;"><span class="w" style="width:35.60px"><span class="x" style="transform:scaleX(0.9480)">15:15</span></span></span>
<span class="t" style="left:1313.12px;top:597.60px;color:#fff;"><span class="w" style="width:35.60px"><span class="x" style="transform:scaleX(0.9480)">17:45</span></span></span>
<span class="t" style="left:1383.71px;top:597.60px;color:#fff;"><span class="w" style="width:35.60px"><span class="x" style="transform:scaleX(0.9480)">20:15</span></span></span>
<span class="t" style="left:1454.30px;top:597.60px;color:#fff;"><span class="w" style="width:35.60px"><span class="x" style="transform:scaleX(0.9480)">22:45</span></span></span>
<span class="t" style="left:1524.60px;top:597.60px;color:#fff;"><span class="w" style="width:23.98px"><span class="x" style="transform:scaleX(0.9273)">Feb</span></span><span style="letter-spacing:-0.063px"> </span><span style="letter-spacing:-0.258px">7</span></span>
<span class="t" style="left:1595.48px;top:597.60px;color:#fff;"><span class="w" style="width:35.60px"><span class="x" style="transform:scaleX(0.9480)">03:45</span></span></span>
<span class="t" style="left:1666.07px;top:597.60px;color:#fff;"><span class="w" style="width:35.60px"><span class="x" style="transform:scaleX(0.9480)">06:15</span></span></span>
<span class="t" style="left:1736.66px;top:597.60px;color:#fff;"><span class="w" style="width:35.60px"><span class="x" style="transform:scaleX(0.9480)">08:45</span></span></span>
<span class="t" style="left:1806.60px;top:597.60px;color:#fff;"><span class="w" style="width:35.60px"><span class="x" style="transform:scaleX(0.9480)">11:30</span></span></span>
<div class="ttla" style="left:398px;top:721px;width:1517px;height:27px;"></div>
<div style="left:399px;top:722px;width:1515px;height:1px;background:rgba(255,255,255,.2)"></div>
<span class="t" style="left:401.30px;top:725.00px;color:#000;"><span class="w" style="width:37.38px"><span class="x" style="transform:scaleX(0.9539)">Trade</span></span><span style="letter-spacing:-0.063px"> </span><span style="letter-spacing:0.046px">History</span></span>
<svg style="left:1861.5px;top:725.5px" width="52" height="18" viewBox="0 0 52 18">
<polygon points="1,6.2 11,6.2 6,11" fill="#505050"/>
<path d="M21.8,3.8 H27 V11.8 H21.8 Z" fill="none" stroke="#505050" stroke-width="1"/><rect x="25.3" y="3.8" width="1.9" height="8" fill="#505050"/>
<rect x="19.8" y="11.5" width="9" height="1.1" fill="#505050"/><rect x="23.8" y="12.4" width="1.1" height="3.8" fill="#505050"/>
<path d="M37.6,3.9 L48,14 M48,3.9 L37.6,14" stroke="#505050" stroke-width="1.4" fill="none"/>
</svg>
<div style="left:398px;top:747px;width:1517px;height:194px;background:#dfe8f6;border:1px solid #7a8aa5"></div>
<div style="left:399px;top:747px;width:1515px;height:193px;background:#fff;border:1px solid #6c93c4"></div>
<div style="left:400px;top:748px;width:1492px;height:30px;background:linear-gradient(#fff,#fff 42%,#f6f6f7 52%,#f2f2f3);border-bottom:1px solid #d9d9d9"></div>
<div style="left:400px;top:748px;width:150px;height:30px;background:linear-gradient(#eef7fd,#e9f4fc 42%,#d9edfa 52%,#d6ebf9);border:1px solid #a6d4f2"></div>
<svg style="left:468px;top:748px" width="14" height="7" viewBox="0 0 14 7"><polygon points="1,1.2 12.6,1.2 6.8,6.2" fill="#7fa6c4"/></svg>
<div style="left:674px;top:749px;width:1px;height:28px;background:#e0e0e0"></div>
<span class="t" style="left:406.00px;top:753.00px;color:#000;"><span style="letter-spacing:-0.272px">Time</span></span>
<span class="t" style="left:556.00px;top:753.00px;color:#000;"><span class="w" style="width:31.78px"><span class="x" style="transform:scaleX(0.9526)">Type</span></span></span>
<span class="t" style="left:681.00px;top:753.00px;color:#000;"><span style="letter-spacing:-0.360px">Message</span></span>
<div style="left:400px;top:748px;width:1492px;height:191px;overflow:hidden"><div style="left:0px;top:52.5px;width:1492px;height:1.3px;background:#d6d6d6"></div><span class="t" style="left:3.60px;top:31.80px;color:#000;"><span class="w" style="width:71.19px"><span class="x" style="transform:scaleX(0.9482)">2018.02.07</span></span><span style="letter-spacing:-0.063px"> </span><span class="w" style="width:55.02px"><span class="x" style="transform:scaleX(0.9423)">11:38:14</span></span></span><span class="t" style="left:153.60px;top:31.80px;color:#000;"><span style="letter-spacing:-0.287px">Binary</span><span style="letter-spacing:-0.063px"> </span><span style="letter-spacing:0.318px">Option</span></span><span class="t" style="left:278.60px;top:31.80px;color:#000;"><span style="letter-spacing:-0.026px">Position</span><span style="letter-spacing:-0.063px"> </span><span style="letter-spacing:-0.128px">#11176</span><span style="letter-spacing:-0.063px"> </span><span style="letter-spacing:-0.053px">opened:</span><span style="letter-spacing:-0.063px"> </span><span class="w" style="width:35.60px"><span class="x" style="transform:scaleX(0.9480)">0.001</span></span><span style="letter-spacing:-0.063px"> </span><span style="letter-spacing:0.292px">on</span><span style="letter-spacing:-0.063px"> </span><span style="letter-spacing:-0.114px">DOWN</span><span style="letter-spacing:-0.063px"> </span><span class="w" style="width:53.52px"><span class="x" style="transform:scaleX(0.8678)">ETCUSD</span></span><span style="letter-spacing:-0.063px"> </span><span style="letter-spacing:0.100px">at</span><span style="letter-spacing:-0.063px"> </span><span class="w" style="width:43.68px"><span class="x" style="transform:scaleX(0.9519)">19.564</span></span></span><div style="left:0px;top:75.5px;width:1492px;height:1.3px;background:#d6d6d6"></div><span class="t" style="left:3.60px;top:55.80px;color:#000;"><span class="w" style="width:71.19px"><span class="x" style="transform:scaleX(0.9482)">2018.02.07</span></span><span style="letter-spacing:-0.063px"> </span><span class="w" style="width:55.02px"><span class="x" style="transform:scaleX(0.9423)">11:38:08</span></span></span><span class="t" style="left:153.60px;top:55.80px;color:#000;"><span style="letter-spacing:-0.287px">Binary</span><span style="letter-spacing:-0.063px"> </span><span style="letter-spacing:0.318px">Option</span></span><span class="t" style="left:278.60px;top:55.80px;color:#000;"><span style="letter-spacing:-0.026px">Position</span><span style="letter-spacing:-0.063px"> </span><span style="letter-spacing:-0.128px">#11175</span><span style="letter-spacing:-0.063px"> </span><span style="letter-spacing:-0.053px">opened:</span><span style="letter-spacing:-0.063px"> </span><span class="w" style="width:35.60px"><span class="x" style="transform:scaleX(0.9480)">0.001</span></span><span style="letter-spacing:-0.063px"> </span><span style="letter-spacing:0.292px">on</span><span style="letter-spacing:-0.063px"> </span><span style="letter-spacing:-0.114px">DOWN</span><span style="letter-spacing:-0.063px"> </span><span class="w" style="width:60.04px"><span class="x" style="transform:scaleX(0.9234)">XMRUSD</span></span><span style="letter-spacing:-0.063px"> </span><span style="letter-spacing:0.100px">at</span><span style="letter-spacing:-0.063px"> </span><span class="w" style="width:51.77px"><span class="x" style="transform:scaleX(0.9545)">211.870</span></span></span><div style="left:0px;top:99.5px;width:1492px;height:1.3px;background:#d6d6d6"></div><span class="t" style="left:3.60px;top:78.80px;color:#000;"><span class="w" style="width:71.19px"><span class="x" style="transform:scaleX(0.9482)">2018.02.07</span></span><span style="letter-spacing:-0.063px"> </span><span class="w" style="width:55.02px"><span class="x" style="transform:scaleX(0.9423)">11:37:53</span></span></span><span class="t" style="left:153.60px;top:78.80px;color:#000;"><span style="letter-spacing:-0.287px">Binary</span><span style="letter-spacing:-0.063px"> </span><span style="letter-spacing:0.318px">Option</span></span><span class="t" style="left:278.60px;top:78.80px;color:#000;"><span style="letter-spacing:-0.026px">Position</span><span style="letter-spacing:-0.063px"> </span><span style="letter-spacing:-0.128px">#11174</span><span style="letter-spacing:-0.063px"> </span><span style="letter-spacing:-0.053px">opened:</span><span style="letter-spacing:-0.063px"> </span><span class="w" style="width:35.60px"><span class="x" style="transform:scaleX(0.9480)">0.001</span></span><span style="letter-spacing:-0.063px"> </span><span style="letter-spacing:0.292px">on</span><span style="letter-spacing:-0.063px"> </span><span class="w" style="width:18.70px"><span class="x" style="transform:scaleX(0.8971)">UP</span></span><span style="letter-spacing:-0.063px"> </span><span class="w" style="width:55.64px"><span class="x" style="transform:scaleX(0.8782)">EOSUSD</span></span><span style="letter-spacing:-0.063px"> </span><span style="letter-spacing:0.100px">at</span><span style="letter-spacing:-0.063px"> </span><span class="w" style="width:35.60px"><span class="x" style="transform:scaleX(0.9480)">8.673</span></span></span><div style="left:0px;top:123.5px;width:1492px;height:1.3px;background:#d6d6d6"></div><span class="t" style="left:3.60px;top:102.80px;color:#000;"><span class="w" style="width:71.19px"><span class="x" style="transform:scaleX(0.9482)">2018.02.07</span></span><span style="letter-spacing:-0.063px"> </span><span class="w" style="width:55.02px"><span class="x" style="transform:scaleX(0.9423)">11:37:44</span></span></span><span class="t" style="left:153.60px;top:102.80px;color:#000;"><span style="letter-spacing:-0.287px">Binary</span><span style="letter-spacing:-0.063px"> </span><span style="letter-spacing:0.318px">Option</span></span><span class="t" style="left:278.60px;top:102.80px;color:#000;"><span style="letter-spacing:-0.026px">Position</span><span style="letter-spacing:-0.063px"> </span><span style="letter-spacing:-0.128px">#11173</span><span style="letter-spacing:-0.063px"> </span><span style="letter-spacing:-0.053px">opened:</span><span style="letter-spacing:-0.063px"> </span><span class="w" style="width:35.60px"><span class="x" style="transform:scaleX(0.9480)">0.001</span></span><span style="letter-spacing:-0.063px"> </span><span style="letter-spacing:0.292px">on</span><span style="letter-spacing:-0.063px"> </span><span style="letter-spacing:-0.114px">DOWN</span><span style="letter-spacing:-0.063px"> </span><span class="w" style="width:60.81px"><span class="x" style="transform:scaleX(0.9235)">OMGBTC</span></span><span style="letter-spacing:-0.063px"> </span><span style="letter-spacing:0.100px">at</span><span style="letter-spacing:-0.063px"> </span><span style="letter-spacing:-0.341px">0.001478</span></span><div style="left:0px;top:147.5px;width:1492px;height:1.3px;background:#d6d6d6"></div><span class="t" style="left:3.60px;top:126.80px;color:#000;"><span class="w" style="width:71.19px"><span class="x" style="transform:scaleX(0.9482)">2018.02.07</span></span><span style="letter-spacing:-0.063px"> </span><span class="w" style="width:55.02px"><span class="x" style="transform:scaleX(0.9423)">11:37:35</span></span></span><span class="t" style="left:153.60px;top:126.80px;color:#000;"><span style="letter-spacing:-0.287px">Binary</span><span style="letter-spacing:-0.063px"> </span><span style="letter-spacing:0.318px">Option</span></span><span class="t" style="left:278.60px;top:126.80px;color:#000;"><span style="letter-spacing:-0.026px">Position</span><span style="letter-spacing:-0.063px"> </span><span style="letter-spacing:-0.128px">#11172</span><span style="letter-spacing:-0.063px"> </span><span style="letter-spacing:-0.053px">opened:</span><span style="letter-spacing:-0.063px"> </span><span class="w" style="width:35.60px"><span class="x" style="transform:scaleX(0.9480)">0.001</span></span><span style="letter-spacing:-0.063px"> </span><span style="letter-spacing:0.292px">on</span><span style="letter-spacing:-0.063px"> </span><span class="w" style="width:18.70px"><span class="x" style="transform:scaleX(0.8971)">UP</span></span><span style="letter-spacing:-0.063px"> </span><span class="w" style="width:54.27px"><span class="x" style="transform:scaleX(0.8799)">BCHBTC</span></span><span style="letter-spacing:-0.063px"> </span><span style="letter-spacing:0.100px">at</span><span style="letter-spacing:-0.063px"> </span><span style="letter-spacing:-0.341px">0.121330</span></span><div style="left:1px;top:149.5px;width:146.5px;height:20px;background:#0078d7"></div><div style="left:151px;top:149.5px;width:121.5px;height:20px;background:#0078d7"></div><div style="left:276px;top:149.5px;width:1212.5px;height:20px;background:#0078d7"></div><div style="left:0px;top:170.5px;width:1492px;height:1.3px;background:#d6d6d6"></div><span class="t" style="left:3.60px;top:150.80px;color:#fff;"><span class="w" style="width:71.19px"><span class="x" style="transform:scaleX(0.9482)">2018.02.07</span></span><span style="letter-spacing:-0.063px"> </span><span class="w" style="width:55.02px"><span class="x" style="transform:scaleX(0.9423)">11:37:30</span></span></span><span class="t" style="left:153.60px;top:150.80px;color:#fff;"><span style="letter-spacing:-0.287px">Binary</span><span style="letter-spacing:-0.063px"> </span><span style="letter-spacing:0.318px">Option</span></span><span class="t" style="left:278.60px;top:150.80px;color:#fff;"><span style="letter-spacing:-0.026px">Position</span><span style="letter-spacing:-0.063px"> </span><span style="letter-spacing:-0.128px">#11171</span><span style="letter-spacing:-0.063px"> </span><span style="letter-spacing:-0.053px">opened:</span><span style="letter-spacing:-0.063px"> </span><span class="w" style="width:35.60px"><span class="x" style="transform:scaleX(0.9480)">0.001</span></span><span style="letter-spacing:-0.063px"> </span><span style="letter-spacing:0.292px">on</span><span style="letter-spacing:-0.063px"> </span><span style="letter-spacing:-0.114px">DOWN</span><span style="letter-spacing:-0.063px"> </span><span class="w" style="width:54.21px"><span class="x" style="transform:scaleX(0.8791)">ZECUSD</span></span><span style="letter-spacing:-0.063px"> </span><span style="letter-spacing:0.100px">at</span><span style="letter-spacing:-0.063px"> </span><span class="w" style="width:51.77px"><span class="x" style="transform:scaleX(0.9545)">364.790</span></span></span><span class="t" style="left:3.60px;top:173.80px;color:#000;"><span class="w" style="width:71.19px"><span class="x" style="transform:scaleX(0.9482)">2018.02.07</span></span><span style="letter-spacing:-0.063px"> </span><span class="w" style="width:55.02px"><span class="x" style="transform:scaleX(0.9423)">11:37:22</span></span></span><span class="t" style="left:153.60px;top:173.80px;color:#000;"><span style="letter-spacing:-0.287px">Binary</span><span style="letter-spacing:-0.063px"> </span><span style="letter-spacing:0.318px">Option</span></span><span class="t" style="left:278.60px;top:173.80px;color:#000;"><span style="letter-spacing:-0.026px">Position</span><span style="letter-spacing:-0.063px"> </span><span style="letter-spacing:-0.128px">#11170</span><span style="letter-spacing:-0.063px"> </span><span style="letter-spacing:-0.053px">opened:</span><span style="letter-spacing:-0.063px"> </span><span class="w" style="width:35.60px"><span class="x" style="transform:scaleX(0.9480)">0.001</span></span><span style="letter-spacing:-0.063px"> </span><span style="letter-spacing:0.292px">on</span><span style="letter-spacing:-0.063px"> </span><span class="w" style="width:18.70px"><span class="x" style="transform:scaleX(0.8971)">UP</span></span><span style="letter-spacing:-0.063px"> </span><span class="w" style="width:51.83px"><span class="x" style="transform:scaleX(0.8639)">ETHBTC</span></span><span style="letter-spacing:-0.063px"> </span><span style="letter-spacing:0.100px">at</span><span style="letter-spacing:-0.063px"> </span><span style="letter-spacing:-0.341px">0.100695</span></span><div style="left:149px;top:30px;width:1.3px;height:162px;background:#d6d6d6"></div><div style="left:274px;top:30px;width:1.3px;height:162px;background:#d6d6d6"></div></div>
<div style="left:1892px;top:778px;width:20px;height:161px;background:#f0f0f0"></div>
<div style="left:1892px;top:799.5px;width:20px;height:28.5px;background:#cdcdcd"></div>
<svg style="left:1896.5px;top:785px" width="11" height="8" viewBox="0 0 11 8"><polyline points="1,6 5.5,1.5 10,6" fill="none" stroke="#9a9a9a" stroke-width="1.3"/></svg>
<svg style="left:1896.5px;top:925.5px" width="11" height="8" viewBox="0 0 11 8"><polyline points="1,1.5 5.5,6 10,1.5" fill="none" stroke="#9a9a9a" stroke-width="1.3"/></svg>
<div style="left:398px;top:942px;width:100px;height:26px;background:linear-gradient(#d3d3d8,#e6e6ea 45%,#f1f1f4);border:1px solid #a3a3ad;border-top-color:#b4b4bc"></div><span class="t" style="left:406.00px;top:945.80px;color:#6c6c6c;"><span class="w" style="width:19.90px"><span class="x" style="transform:scaleX(0.9176)">BO</span></span><span style="letter-spacing:-0.063px"> </span><span style="letter-spacing:-0.149px">Positions</span></span><div style="left:600px;top:942px;width:54px;height:26px;background:linear-gradient(#d3d3d8,#e6e6ea 45%,#f1f1f4);border:1px solid #a3a3ad;border-top-color:#b4b4bc"></div><span class="t" style="left:609.00px;top:945.80px;color:#6c6c6c;"><span style="letter-spacing:-0.315px">News</span></span><div style="left:497px;top:941px;width:104px;height:29.5px;background:#fff;border:1px solid #9a9aa6;border-top:none"></div><span class="t" style="left:505.40px;top:945.80px;color:#000;"><span class="w" style="width:37.38px"><span class="x" style="transform:scaleX(0.9539)">Trade</span></span><span style="letter-spacing:-0.063px"> </span><span style="letter-spacing:0.046px">History</span></span>
<span class="t" style="left:3.60px;top:979.80px;color:#000;"><span style="letter-spacing:-0.110px">Connected</span></span>
<div style="left:128px;top:978px;width:1px;height:24px;background:#8c8c8c"></div>
<span class="t" style="left:134.50px;top:979.80px;color:#000;"><span style="letter-spacing:0.039px">Account</span><span style="letter-spacing:-0.055px"> </span><span style="letter-spacing:-0.913px">:</span><span style="letter-spacing:-0.055px">  </span><span style="letter-spacing:-0.241px">1015</span></span>
<span class="t" style="left:262.50px;top:979.80px;color:#000;"><span class="w" style="width:51.09px"><span class="x" style="transform:scaleX(0.9423)">Balance</span></span><span style="letter-spacing:-0.035px"> </span><span style="letter-spacing:-0.898px">:</span></span>
<span class="t" style="left:336.30px;top:979.80px;color:#000;"><span style="letter-spacing:-0.322px">0.80160000</span></span>
<span class="t" style="left:420.00px;top:979.80px;color:#000;"><span class="w" style="width:25.74px"><span class="x" style="transform:scaleX(0.8579)">BTC</span></span></span>
<span class="t" style="left:464.50px;top:979.80px;color:#000;"><span style="letter-spacing:-0.101px">Equity</span><span style="letter-spacing:-0.041px"> </span><span style="letter-spacing:-0.902px">:</span></span>
<span class="t" style="left:527.80px;top:979.80px;color:#000;"><span style="letter-spacing:-0.322px">0.79460000</span></span>
<span class="t" style="left:611.70px;top:979.80px;color:#000;"><span class="w" style="width:25.74px"><span class="x" style="transform:scaleX(0.8579)">BTC</span></span></span>
<span class="t" style="left:1817.54px;top:979.80px;color:#000;"><span style="letter-spacing:-0.069px">618kb</span><span style="letter-spacing:-0.063px"> </span><span style="letter-spacing:1.673px">/</span><span style="letter-spacing:-0.063px"> </span><span style="letter-spacing:0.058px">7kb</span></span>
<div style="left:40px;top:31px;width:211px;height:267px;background:#f1f1f1;border:1px solid #9a9a9a"></div>
<div style="left:41px;top:31px;width:47px;height:1px;background:#c2deec"></div>
<div style="left:80px;top:37px;width:1px;height:258px;background:#d9d9d9"></div>
<div style="left:81px;top:37px;width:1px;height:258px;background:#fff"></div>
<div style="left:81px;top:65px;width:166px;height:1px;background:#d7d7d7"></div>
<div style="left:81px;top:99px;width:166px;height:1px;background:#d7d7d7"></div>
<span class="t" style="left:87.30px;top:39.80px;color:#000;"><span style="letter-spacing:-0.244px">Language</span></span>
<span class="t" style="left:87.30px;top:72.80px;color:#000;"><span style="letter-spacing:-0.124px">Layout</span></span>
<svg style="left:233px;top:43.2px" width="8" height="10" viewBox="0 0 8 10"><polygon points="1.2,0.8 6.8,5 1.2,9.2" fill="#1a1a1a"/></svg>
<svg style="left:233px;top:76.8px" width="8" height="10" viewBox="0 0 8 10"><polygon points="1.2,0.8 6.8,5 1.2,9.2" fill="#1a1a1a"/></svg>
<div style="left:44px;top:102px;width:27px;height:27.5px;background:#c2deec;border:1px solid #26a0da"></div>
<svg style="left:49px;top:108.0px" width="16" height="14" viewBox="0 0 16 14"><path d="M3.2,6.8 L6.6,10.6 L12.6,2.6" fill="none" stroke="#1a1a1a" stroke-width="2.1"/></svg>
<span class="t" style="left:87.30px;top:106.80px;color:#000;"><span style="letter-spacing:-0.287px">Binary</span><span style="letter-spacing:-0.063px"> </span><span style="letter-spacing:0.111px">Options</span></span>
<div style="left:44px;top:130px;width:27px;height:27.5px;background:#c2deec;border:1px solid #26a0da"></div>
<svg style="left:49px;top:135.5px" width="16" height="14" viewBox="0 0 16 14"><path d="M3.2,6.8 L6.6,10.6 L12.6,2.6" fill="none" stroke="#1a1a1a" stroke-width="2.1"/></svg>
<span class="t" style="left:87.30px;top:133.80px;color:#000;"><span class="w" style="width:37.38px"><span class="x" style="transform:scaleX(0.9539)">Trade</span></span><span style="letter-spacing:-0.063px"> </span><span style="letter-spacing:-0.119px">Robots</span></span>
<div style="left:44px;top:157px;width:27px;height:27.5px;background:#c2deec;border:1px solid #26a0da"></div>
<svg style="left:49px;top:163.0px" width="16" height="14" viewBox="0 0 16 14"><path d="M3.2,6.8 L6.6,10.6 L12.6,2.6" fill="none" stroke="#1a1a1a" stroke-width="2.1"/></svg>
<span class="t" style="left:87.30px;top:161.80px;color:#000;"><span style="letter-spacing:-0.292px">Favorites</span></span>
<div style="left:44px;top:185px;width:27px;height:27.5px;background:#c2deec;border:1px solid #26a0da"></div>
<svg style="left:49px;top:190.5px" width="16" height="14" viewBox="0 0 16 14"><path d="M3.2,6.8 L6.6,10.6 L12.6,2.6" fill="none" stroke="#1a1a1a" stroke-width="2.1"/></svg>
<span class="t" style="left:87.30px;top:188.80px;color:#000;"><span class="w" style="width:25.88px"><span class="x" style="transform:scaleX(0.9410)">Tick</span></span><span style="letter-spacing:-0.063px"> </span><span style="letter-spacing:-0.198px">Chart</span></span>
<div style="left:44px;top:212px;width:27px;height:27.5px;background:#c2deec;border:1px solid #26a0da"></div>
<svg style="left:49px;top:218.0px" width="16" height="14" viewBox="0 0 16 14"><path d="M3.2,6.8 L6.6,10.6 L12.6,2.6" fill="none" stroke="#1a1a1a" stroke-width="2.1"/></svg>
<span class="t" style="left:87.30px;top:216.80px;color:#000;"><span class="w" style="width:19.90px"><span class="x" style="transform:scaleX(0.9176)">BO</span></span><span style="letter-spacing:-0.063px"> </span><span style="letter-spacing:-0.149px">Positions</span></span>
<div style="left:44px;top:240px;width:27px;height:27.5px;background:#c2deec;border:1px solid #26a0da"></div>
<svg style="left:49px;top:245.5px" width="16" height="14" viewBox="0 0 16 14"><path d="M3.2,6.8 L6.6,10.6 L12.6,2.6" fill="none" stroke="#1a1a1a" stroke-width="2.1"/></svg>
<span class="t" style="left:87.30px;top:243.80px;color:#000;"><span class="w" style="width:37.38px"><span class="x" style="transform:scaleX(0.9539)">Trade</span></span><span style="letter-spacing:-0.063px"> </span><span style="letter-spacing:0.046px">History</span></span>
<div style="left:44px;top:267px;width:27px;height:27.5px;background:#c2deec;border:1px solid #26a0da"></div>
<svg style="left:49px;top:273.0px" width="16" height="14" viewBox="0 0 16 14"><path d="M3.2,6.8 L6.6,10.6 L12.6,2.6" fill="none" stroke="#1a1a1a" stroke-width="2.1"/></svg>
<span class="t" style="left:87.30px;top:271.80px;color:#000;"><span style="letter-spacing:-0.315px">News</span></span>
</body></html>
